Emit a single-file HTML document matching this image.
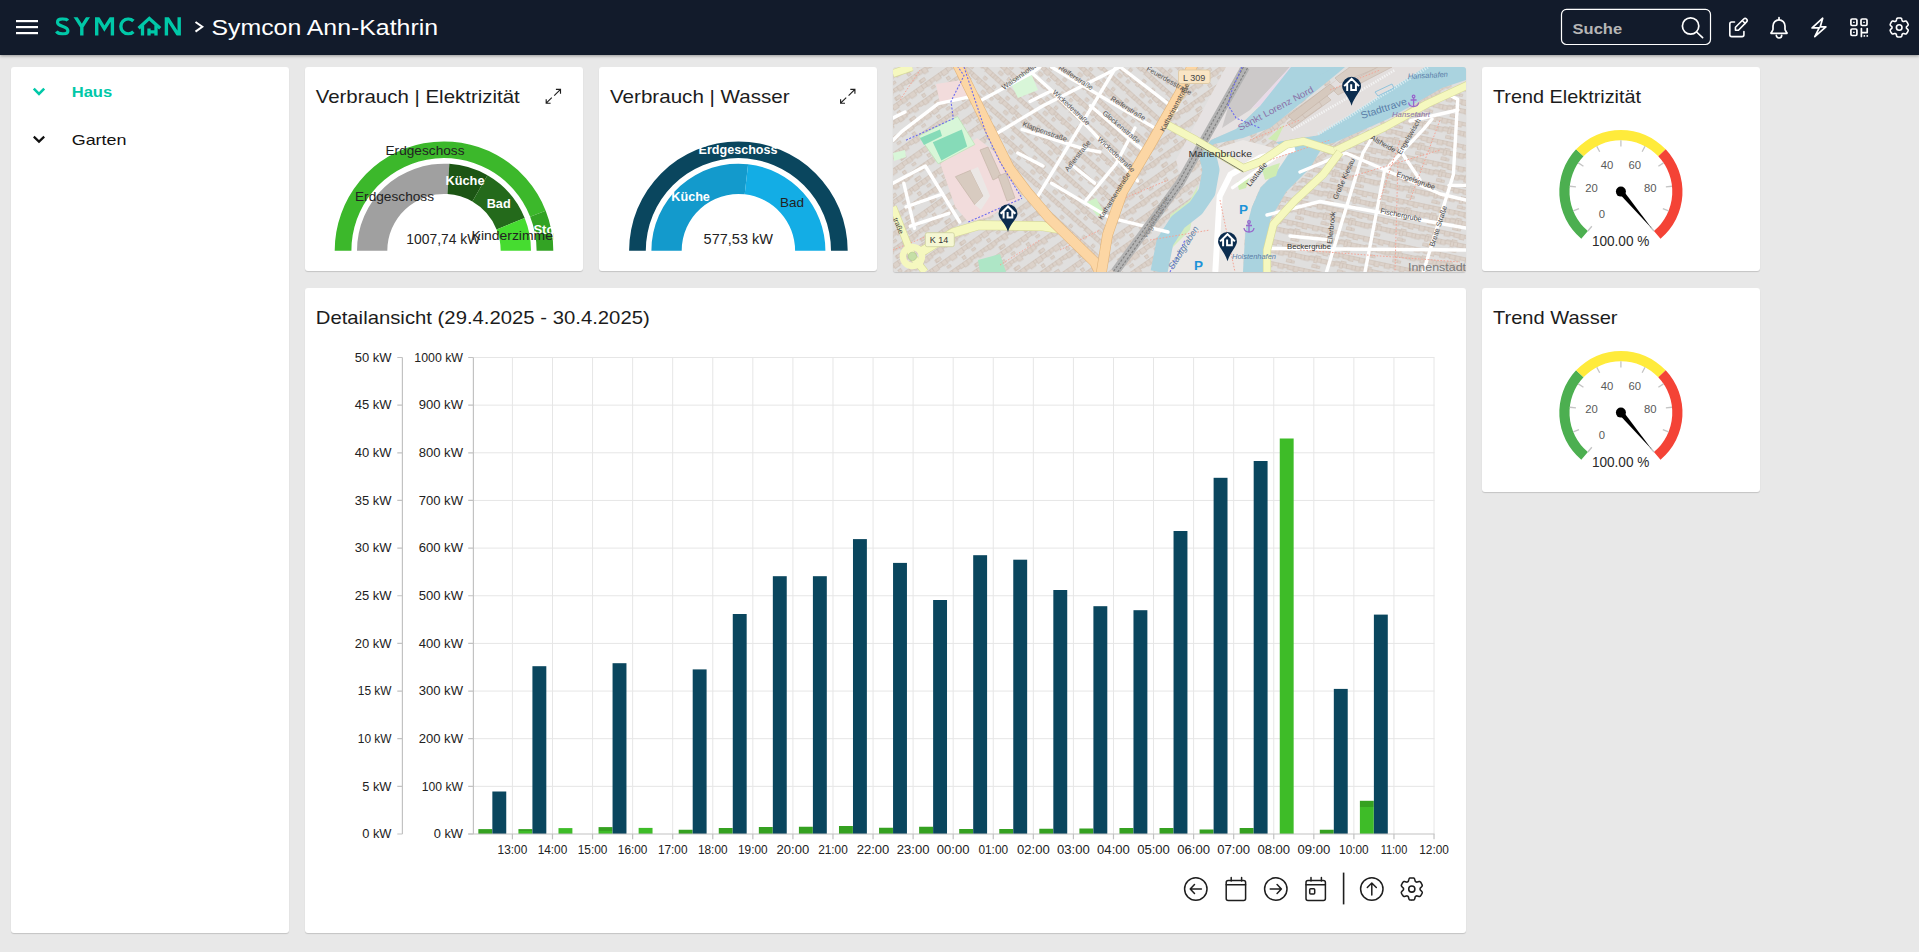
<!DOCTYPE html>
<html><head><meta charset="utf-8"><title>Symcon</title>
<style>
html,body{margin:0;padding:0;width:1919px;height:952px;overflow:hidden;background:#e8e8e8;font-family:"Liberation Sans",sans-serif;}
.hdr{position:absolute;left:0;top:0;width:1919px;height:55px;background:#121b2b;box-shadow:0 1px 3px rgba(0,0,0,.36);z-index:2}
.card{position:absolute;background:#fff;border-radius:3px;box-shadow:0 1px 1px rgba(0,0,0,.16);}
svg{position:absolute;left:0;top:0;}
</style></head><body>
<div class="hdr"></div>
<div class="card" style="left:11px;top:67px;width:278px;height:866px"></div>
<div class="card" style="left:305px;top:67px;width:278px;height:204px"></div>
<div class="card" style="left:599px;top:67px;width:278px;height:204px"></div>
<div class="card" style="left:893px;top:67px;width:573px;height:205px;overflow:hidden;background:#e4e1de"></div>
<div class="card" style="left:1482px;top:67px;width:278px;height:204px"></div>
<div class="card" style="left:305px;top:288px;width:1161px;height:645px"></div>
<div class="card" style="left:1482px;top:288px;width:278px;height:204px"></div>

<svg width="1919" height="952" viewBox="0 0 1919 952" style="z-index:3" font-family="Liberation Sans, sans-serif">
<rect x="16" y="20" width="22" height="2.2" fill="#fff"/>
<rect x="16" y="26" width="22" height="2.2" fill="#fff"/>
<rect x="16" y="32" width="22" height="2.2" fill="#fff"/>
<defs><clipPath id="lclip"><rect x="50" y="17.3" width="140" height="18.2"/></clipPath></defs>
<g fill="none" stroke="#00c8a8" stroke-width="3.4" stroke-linejoin="miter" clip-path="url(#lclip)">
<path d="M67.8,20.6 C66.8,19 64.8,18.9 62.4,18.9 C59.4,18.9 57.5,20.2 57.5,22.3 C57.5,24.6 59.6,25.4 62.4,26.3 C65.4,27.2 67.9,28.2 67.9,30.9 C67.9,33 65.6,33.9 62.4,33.9 C59.6,33.9 57.6,33.2 56.4,31.4" stroke-width="3.2"/>
<path d="M74.2,15 L81.8,26.8 L89.4,15 M81.8,26.8 L81.8,36"/>
<path d="M96.7,36 V16 L104.4,28.6 L112.4,16 V36"/>
<path d="M133.4,21 A7.4,7.5 0 1 0 133.4,31.8"/>
<path d="M166.4,36 V16.5 L179.2,36.5 V16"/>
</g>
<g fill="none" stroke="#00c8a8" stroke-width="3.3" stroke-linejoin="miter">
<path d="M138.6,28.2 L149.3,18.4 L160.2,28.2"/>
<path d="M142.5,25.2 V35.5 M156,25.2 V35.5 M149,28.6 V35.5 M149,31.9 H156"/>
</g>
<path d="M195.5,22 L202.3,26.8 L195.5,31.6" fill="none" stroke="#fff" stroke-width="2"/>
<text x="211.5" y="35.3" font-size="22" fill="#fff" textLength="226.5" lengthAdjust="spacingAndGlyphs">Symcon Ann-Kathrin</text>
<rect x="1561.5" y="9.4" width="149" height="35.1" rx="5" fill="none" stroke="#fff" stroke-width="1.2"/>
<text x="1572.6" y="33.9" font-size="15.3" font-weight="bold" fill="#b6b6b6" textLength="49.5" lengthAdjust="spacingAndGlyphs">Suche</text>
<g fill="none" stroke="#fff" stroke-width="1.7" stroke-linecap="round" stroke-linejoin="round">
<circle cx="1690.6" cy="26" r="8.2"/><path d="M1696.6,32 L1702.6,37.6"/>
<g transform="translate(1727,16.4) scale(0.94)"><path d="M8,6 H5 A2,2 0 0 0 3,8 V19.5 A2,2 0 0 0 5,21.5 H16 A2,2 0 0 0 18,19.5 V16"/><path d="M20.8,5.8 A2.1,2.1 0 0 0 17.8,2.8 L9,11.6 V14.8 H12.2 Z"/><path d="M16.3,4.4 L19.3,7.4"/></g>
<path d="M1771.3,32.6 Q1770.5,33.4 1771.8,33.4 H1786.2 Q1787.5,33.4 1786.7,32.6 L1785.6,30.8 Q1785,30.1 1785,29 V26 A6,6.2 0 0 0 1773,26 V29 Q1773,30.1 1772.4,30.8 Z"/><path d="M1779,17.7 V19.6"/><path d="M1776.3,35.3 A2.7,2.7 0 0 0 1781.7,35.3"/>
<path d="M1822.7,18.2 L1820.2,26.9 H1825.9 L1814.8,36.7 L1819.2,27.9 H1812.1 Z"/>
<rect x="1850.9" y="19" width="6" height="6.5" rx="1.2"/><rect x="1861" y="19" width="6" height="6.5" rx="1.2"/><rect x="1850.9" y="29" width="6" height="6.5" rx="1.2"/><path d="M1853.9,22.25 h0.05 M1864,22.25 h0.05 M1853.9,32.25 h0.05 M1861.4,28.6 V36.4 M1861.4,32.6 H1867.2 M1867.2,28.6 V32.6 M1864.3,35.9 h0.1 M1867.2,35.9 h0.1"/>
<path d="M1906.40,27.50 L1906.40,27.44 L1906.40,27.37 L1906.40,27.31 L1906.40,27.25 L1906.39,27.19 L1906.39,27.12 L1906.39,27.06 L1906.40,27.00 L1906.43,26.93 L1906.46,26.86 L1906.50,26.80 L1906.55,26.73 L1906.61,26.66 L1906.68,26.58 L1906.76,26.51 L1906.84,26.43 L1906.92,26.35 L1907.01,26.26 L1907.11,26.18 L1907.20,26.09 L1907.30,26.00 L1907.40,25.91 L1907.49,25.81 L1907.59,25.72 L1907.68,25.62 L1907.76,25.52 L1907.85,25.42 L1907.92,25.33 L1907.99,25.23 L1908.05,25.13 L1908.10,25.03 L1908.15,24.93 L1908.18,24.84 L1908.20,24.75 L1908.21,24.66 L1908.21,24.57 L1908.20,24.49 L1908.18,24.41 L1908.16,24.33 L1908.13,24.25 L1908.10,24.17 L1908.07,24.10 L1908.04,24.02 L1908.01,23.94 L1907.98,23.86 L1907.94,23.79 L1907.91,23.71 L1907.88,23.64 L1907.84,23.56 L1907.81,23.49 L1907.77,23.41 L1907.74,23.34 L1907.70,23.26 L1907.66,23.19 L1907.63,23.11 L1907.59,23.04 L1907.55,22.97 L1907.51,22.89 L1907.47,22.82 L1907.43,22.75 L1907.39,22.68 L1907.34,22.61 L1907.30,22.54 L1907.26,22.47 L1907.21,22.40 L1907.17,22.33 L1907.12,22.26 L1907.08,22.19 L1907.03,22.12 L1906.98,22.05 L1906.93,21.98 L1906.89,21.92 L1906.84,21.85 L1906.79,21.78 L1906.74,21.72 L1906.69,21.65 L1906.63,21.59 L1906.58,21.52 L1906.53,21.46 L1906.48,21.39 L1906.42,21.33 L1906.37,21.27 L1906.31,21.21 L1906.24,21.16 L1906.17,21.12 L1906.08,21.08 L1905.99,21.05 L1905.89,21.04 L1905.79,21.02 L1905.68,21.02 L1905.56,21.02 L1905.44,21.03 L1905.32,21.05 L1905.19,21.07 L1905.07,21.10 L1904.94,21.13 L1904.81,21.16 L1904.68,21.20 L1904.55,21.24 L1904.42,21.28 L1904.30,21.31 L1904.18,21.35 L1904.06,21.39 L1903.95,21.42 L1903.84,21.45 L1903.74,21.48 L1903.64,21.50 L1903.55,21.52 L1903.46,21.53 L1903.38,21.53 L1903.31,21.53 L1903.24,21.51 L1903.18,21.49 L1903.12,21.46 L1903.07,21.43 L1903.02,21.39 L1902.96,21.36 L1902.91,21.33 L1902.85,21.30 L1902.80,21.26 L1902.75,21.23 L1902.69,21.20 L1902.64,21.17 L1902.58,21.14 L1902.52,21.11 L1902.47,21.08 L1902.42,21.05 L1902.37,21.01 L1902.32,20.96 L1902.28,20.90 L1902.24,20.82 L1902.21,20.75 L1902.18,20.66 L1902.14,20.56 L1902.12,20.46 L1902.09,20.35 L1902.06,20.24 L1902.03,20.12 L1902.01,19.99 L1901.98,19.86 L1901.95,19.74 L1901.92,19.60 L1901.89,19.47 L1901.85,19.35 L1901.81,19.22 L1901.77,19.09 L1901.73,18.97 L1901.68,18.86 L1901.63,18.75 L1901.57,18.65 L1901.51,18.56 L1901.45,18.47 L1901.39,18.39 L1901.32,18.33 L1901.25,18.27 L1901.17,18.23 L1901.09,18.20 L1901.01,18.17 L1900.93,18.16 L1900.85,18.14 L1900.77,18.13 L1900.69,18.12 L1900.60,18.10 L1900.52,18.09 L1900.44,18.08 L1900.36,18.07 L1900.28,18.06 L1900.19,18.05 L1900.11,18.04 L1900.03,18.04 L1899.95,18.03 L1899.86,18.02 L1899.78,18.02 L1899.70,18.01 L1899.61,18.01 L1899.53,18.01 L1899.45,18.00 L1899.37,18.00 L1899.28,18.00 L1899.20,18.00 L1899.12,18.00 L1899.03,18.00 L1898.95,18.00 L1898.87,18.01 L1898.79,18.01 L1898.70,18.01 L1898.62,18.02 L1898.54,18.02 L1898.45,18.03 L1898.37,18.04 L1898.29,18.04 L1898.21,18.05 L1898.12,18.06 L1898.04,18.07 L1897.96,18.08 L1897.88,18.09 L1897.80,18.10 L1897.71,18.12 L1897.63,18.13 L1897.55,18.14 L1897.47,18.16 L1897.39,18.17 L1897.31,18.20 L1897.23,18.23 L1897.15,18.27 L1897.08,18.33 L1897.01,18.39 L1896.95,18.47 L1896.89,18.56 L1896.83,18.65 L1896.77,18.75 L1896.72,18.86 L1896.67,18.97 L1896.63,19.09 L1896.59,19.22 L1896.55,19.35 L1896.51,19.47 L1896.48,19.60 L1896.45,19.74 L1896.42,19.86 L1896.39,19.99 L1896.37,20.12 L1896.34,20.24 L1896.31,20.35 L1896.28,20.46 L1896.26,20.56 L1896.22,20.66 L1896.19,20.75 L1896.16,20.82 L1896.12,20.90 L1896.08,20.96 L1896.03,21.01 L1895.98,21.05 L1895.93,21.08 L1895.88,21.11 L1895.82,21.14 L1895.76,21.17 L1895.71,21.20 L1895.65,21.23 L1895.60,21.26 L1895.55,21.30 L1895.49,21.33 L1895.44,21.36 L1895.38,21.39 L1895.33,21.43 L1895.28,21.46 L1895.22,21.49 L1895.16,21.51 L1895.09,21.53 L1895.02,21.53 L1894.94,21.53 L1894.85,21.52 L1894.76,21.50 L1894.66,21.48 L1894.56,21.45 L1894.45,21.42 L1894.34,21.39 L1894.22,21.35 L1894.10,21.31 L1893.98,21.28 L1893.85,21.24 L1893.72,21.20 L1893.59,21.16 L1893.46,21.13 L1893.33,21.10 L1893.21,21.07 L1893.08,21.05 L1892.96,21.03 L1892.84,21.02 L1892.72,21.02 L1892.61,21.02 L1892.51,21.04 L1892.41,21.05 L1892.32,21.08 L1892.23,21.12 L1892.16,21.16 L1892.09,21.21 L1892.03,21.27 L1891.98,21.33 L1891.92,21.39 L1891.87,21.46 L1891.82,21.52 L1891.77,21.59 L1891.71,21.65 L1891.66,21.72 L1891.61,21.78 L1891.56,21.85 L1891.51,21.92 L1891.47,21.98 L1891.42,22.05 L1891.37,22.12 L1891.32,22.19 L1891.28,22.26 L1891.23,22.33 L1891.19,22.40 L1891.14,22.47 L1891.10,22.54 L1891.06,22.61 L1891.01,22.68 L1890.97,22.75 L1890.93,22.82 L1890.89,22.89 L1890.85,22.97 L1890.81,23.04 L1890.77,23.11 L1890.74,23.19 L1890.70,23.26 L1890.66,23.34 L1890.63,23.41 L1890.59,23.49 L1890.56,23.56 L1890.52,23.64 L1890.49,23.71 L1890.46,23.79 L1890.42,23.86 L1890.39,23.94 L1890.36,24.02 L1890.33,24.10 L1890.30,24.17 L1890.27,24.25 L1890.24,24.33 L1890.22,24.41 L1890.20,24.49 L1890.19,24.57 L1890.19,24.66 L1890.20,24.75 L1890.22,24.84 L1890.25,24.93 L1890.30,25.03 L1890.35,25.13 L1890.41,25.23 L1890.48,25.33 L1890.55,25.42 L1890.64,25.52 L1890.72,25.62 L1890.81,25.72 L1890.91,25.81 L1891.00,25.91 L1891.10,26.00 L1891.20,26.09 L1891.29,26.18 L1891.39,26.26 L1891.48,26.35 L1891.56,26.43 L1891.64,26.51 L1891.72,26.58 L1891.79,26.66 L1891.85,26.73 L1891.90,26.80 L1891.94,26.86 L1891.97,26.93 L1892.00,27.00 L1892.01,27.06 L1892.01,27.12 L1892.01,27.19 L1892.00,27.25 L1892.00,27.31 L1892.00,27.37 L1892.00,27.44 L1892.00,27.50 L1892.00,27.56 L1892.00,27.63 L1892.00,27.69 L1892.00,27.75 L1892.01,27.81 L1892.01,27.88 L1892.01,27.94 L1892.00,28.00 L1891.97,28.07 L1891.94,28.14 L1891.90,28.20 L1891.85,28.27 L1891.79,28.34 L1891.72,28.42 L1891.64,28.49 L1891.56,28.57 L1891.48,28.65 L1891.39,28.74 L1891.29,28.82 L1891.20,28.91 L1891.10,29.00 L1891.00,29.09 L1890.91,29.19 L1890.81,29.28 L1890.72,29.38 L1890.64,29.48 L1890.55,29.58 L1890.48,29.67 L1890.41,29.77 L1890.35,29.87 L1890.30,29.97 L1890.25,30.07 L1890.22,30.16 L1890.20,30.25 L1890.19,30.34 L1890.19,30.43 L1890.20,30.51 L1890.22,30.59 L1890.24,30.67 L1890.27,30.75 L1890.30,30.83 L1890.33,30.90 L1890.36,30.98 L1890.39,31.06 L1890.42,31.14 L1890.46,31.21 L1890.49,31.29 L1890.52,31.36 L1890.56,31.44 L1890.59,31.51 L1890.63,31.59 L1890.66,31.66 L1890.70,31.74 L1890.74,31.81 L1890.77,31.89 L1890.81,31.96 L1890.85,32.03 L1890.89,32.11 L1890.93,32.18 L1890.97,32.25 L1891.01,32.32 L1891.06,32.39 L1891.10,32.46 L1891.14,32.53 L1891.19,32.60 L1891.23,32.67 L1891.28,32.74 L1891.32,32.81 L1891.37,32.88 L1891.42,32.95 L1891.47,33.02 L1891.51,33.08 L1891.56,33.15 L1891.61,33.22 L1891.66,33.28 L1891.71,33.35 L1891.77,33.41 L1891.82,33.48 L1891.87,33.54 L1891.92,33.61 L1891.98,33.67 L1892.03,33.73 L1892.09,33.79 L1892.16,33.84 L1892.23,33.88 L1892.32,33.92 L1892.41,33.95 L1892.51,33.96 L1892.61,33.98 L1892.72,33.98 L1892.84,33.98 L1892.96,33.97 L1893.08,33.95 L1893.21,33.93 L1893.33,33.90 L1893.46,33.87 L1893.59,33.84 L1893.72,33.80 L1893.85,33.76 L1893.98,33.72 L1894.10,33.69 L1894.22,33.65 L1894.34,33.61 L1894.45,33.58 L1894.56,33.55 L1894.66,33.52 L1894.76,33.50 L1894.85,33.48 L1894.94,33.47 L1895.02,33.47 L1895.09,33.47 L1895.16,33.49 L1895.22,33.51 L1895.28,33.54 L1895.33,33.57 L1895.38,33.61 L1895.44,33.64 L1895.49,33.67 L1895.55,33.70 L1895.60,33.74 L1895.65,33.77 L1895.71,33.80 L1895.76,33.83 L1895.82,33.86 L1895.88,33.89 L1895.93,33.92 L1895.98,33.95 L1896.03,33.99 L1896.08,34.04 L1896.12,34.10 L1896.16,34.18 L1896.19,34.25 L1896.22,34.34 L1896.26,34.44 L1896.28,34.54 L1896.31,34.65 L1896.34,34.76 L1896.37,34.88 L1896.39,35.01 L1896.42,35.14 L1896.45,35.26 L1896.48,35.40 L1896.51,35.53 L1896.55,35.65 L1896.59,35.78 L1896.63,35.91 L1896.67,36.03 L1896.72,36.14 L1896.77,36.25 L1896.83,36.35 L1896.89,36.44 L1896.95,36.53 L1897.01,36.61 L1897.08,36.67 L1897.15,36.73 L1897.23,36.77 L1897.31,36.80 L1897.39,36.83 L1897.47,36.84 L1897.55,36.86 L1897.63,36.87 L1897.71,36.88 L1897.80,36.90 L1897.88,36.91 L1897.96,36.92 L1898.04,36.93 L1898.12,36.94 L1898.21,36.95 L1898.29,36.96 L1898.37,36.96 L1898.45,36.97 L1898.54,36.98 L1898.62,36.98 L1898.70,36.99 L1898.79,36.99 L1898.87,36.99 L1898.95,37.00 L1899.03,37.00 L1899.12,37.00 L1899.20,37.00 L1899.28,37.00 L1899.37,37.00 L1899.45,37.00 L1899.53,36.99 L1899.61,36.99 L1899.70,36.99 L1899.78,36.98 L1899.86,36.98 L1899.95,36.97 L1900.03,36.96 L1900.11,36.96 L1900.19,36.95 L1900.28,36.94 L1900.36,36.93 L1900.44,36.92 L1900.52,36.91 L1900.60,36.90 L1900.69,36.88 L1900.77,36.87 L1900.85,36.86 L1900.93,36.84 L1901.01,36.83 L1901.09,36.80 L1901.17,36.77 L1901.25,36.73 L1901.32,36.67 L1901.39,36.61 L1901.45,36.53 L1901.51,36.44 L1901.57,36.35 L1901.63,36.25 L1901.68,36.14 L1901.73,36.03 L1901.77,35.91 L1901.81,35.78 L1901.85,35.65 L1901.89,35.53 L1901.92,35.40 L1901.95,35.26 L1901.98,35.14 L1902.01,35.01 L1902.03,34.88 L1902.06,34.76 L1902.09,34.65 L1902.12,34.54 L1902.14,34.44 L1902.18,34.34 L1902.21,34.25 L1902.24,34.18 L1902.28,34.10 L1902.32,34.04 L1902.37,33.99 L1902.42,33.95 L1902.47,33.92 L1902.52,33.89 L1902.58,33.86 L1902.64,33.83 L1902.69,33.80 L1902.75,33.77 L1902.80,33.74 L1902.85,33.70 L1902.91,33.67 L1902.96,33.64 L1903.02,33.61 L1903.07,33.57 L1903.12,33.54 L1903.18,33.51 L1903.24,33.49 L1903.31,33.47 L1903.38,33.47 L1903.46,33.47 L1903.55,33.48 L1903.64,33.50 L1903.74,33.52 L1903.84,33.55 L1903.95,33.58 L1904.06,33.61 L1904.18,33.65 L1904.30,33.69 L1904.42,33.72 L1904.55,33.76 L1904.68,33.80 L1904.81,33.84 L1904.94,33.87 L1905.07,33.90 L1905.19,33.93 L1905.32,33.95 L1905.44,33.97 L1905.56,33.98 L1905.68,33.98 L1905.79,33.98 L1905.89,33.96 L1905.99,33.95 L1906.08,33.92 L1906.17,33.88 L1906.24,33.84 L1906.31,33.79 L1906.37,33.73 L1906.42,33.67 L1906.48,33.61 L1906.53,33.54 L1906.58,33.48 L1906.63,33.41 L1906.69,33.35 L1906.74,33.28 L1906.79,33.22 L1906.84,33.15 L1906.89,33.08 L1906.93,33.02 L1906.98,32.95 L1907.03,32.88 L1907.08,32.81 L1907.12,32.74 L1907.17,32.67 L1907.21,32.60 L1907.26,32.53 L1907.30,32.46 L1907.34,32.39 L1907.39,32.32 L1907.43,32.25 L1907.47,32.18 L1907.51,32.11 L1907.55,32.03 L1907.59,31.96 L1907.63,31.89 L1907.66,31.81 L1907.70,31.74 L1907.74,31.66 L1907.77,31.59 L1907.81,31.51 L1907.84,31.44 L1907.88,31.36 L1907.91,31.29 L1907.94,31.21 L1907.98,31.14 L1908.01,31.06 L1908.04,30.98 L1908.07,30.90 L1908.10,30.83 L1908.13,30.75 L1908.16,30.67 L1908.18,30.59 L1908.20,30.51 L1908.21,30.43 L1908.21,30.34 L1908.20,30.25 L1908.18,30.16 L1908.15,30.07 L1908.10,29.97 L1908.05,29.87 L1907.99,29.77 L1907.92,29.67 L1907.85,29.58 L1907.76,29.48 L1907.68,29.38 L1907.59,29.28 L1907.49,29.19 L1907.40,29.09 L1907.30,29.00 L1907.20,28.91 L1907.11,28.82 L1907.01,28.74 L1906.92,28.65 L1906.84,28.57 L1906.76,28.49 L1906.68,28.42 L1906.61,28.34 L1906.55,28.27 L1906.50,28.20 L1906.46,28.14 L1906.43,28.07 L1906.40,28.00 L1906.39,27.94 L1906.39,27.88 L1906.39,27.81 L1906.40,27.75 L1906.40,27.69 L1906.40,27.63 L1906.40,27.56 L1906.40,27.50 L1906.40,27.44 Z" stroke-width="1.6"/><circle cx="1899.2" cy="27.5" r="2.8" stroke-width="1.6"/>
</g>
<path d="M33.8,88.6 L39,93.8 L44.2,88.6" fill="none" stroke="#00c8a8" stroke-width="2.6"/>
<text x="71.7" y="97" font-size="15.2" font-weight="bold" fill="#00c8a8" textLength="40.5" lengthAdjust="spacingAndGlyphs">Haus</text>
<path d="M33.8,136.6 L39,141.6 L44.2,136.6" fill="none" stroke="#111" stroke-width="2.2"/>
<text x="71.7" y="144.7" font-size="15" fill="#111" textLength="54.8" lengthAdjust="spacingAndGlyphs">Garten</text>
<text x="315.7" y="103.2" font-size="18.5" fill="#1c1c1c" textLength="204" lengthAdjust="spacingAndGlyphs">Verbrauch | Elektrizität</text>
<text x="610" y="103.2" font-size="18.5" fill="#1c1c1c" textLength="179.6" lengthAdjust="spacingAndGlyphs">Verbrauch | Wasser</text>
<text x="1493" y="103.2" font-size="18.5" fill="#1c1c1c" textLength="148" lengthAdjust="spacingAndGlyphs">Trend Elektrizität</text>
<text x="1493" y="324.1" font-size="18.5" fill="#1c1c1c" textLength="124.5" lengthAdjust="spacingAndGlyphs">Trend Wasser</text>
<text x="315.75" y="324.1" font-size="18.5" fill="#1c1c1c" textLength="334" lengthAdjust="spacingAndGlyphs">Detailansicht (29.4.2025 - 30.4.2025)</text>
<path d="M555.90,89.35 H560.50 V93.80 M560.50,89.35 L554.20,95.60 M546.20,99.35 V103.20 H550.60 M546.20,103.20 L551.80,97.60" fill="none" stroke="#1e1e1e" stroke-width="1.15" stroke-linecap="butt"/>
<path d="M850.30,89.35 H854.90 V93.80 M854.90,89.35 L848.60,95.60 M840.60,99.35 V103.20 H845.00 M840.60,103.20 L846.20,97.60" fill="none" stroke="#1e1e1e" stroke-width="1.15" stroke-linecap="butt"/>
<path d="M334.70,250.70 A109.3,109.3 0 0 1 545.69,210.64 L530.16,216.76 A92.6,92.6 0 0 0 351.40,250.70 Z" fill="#3cb82b" />
<path d="M545.69,210.64 A109.3,109.3 0 0 1 553.30,250.70 L536.60,250.70 A92.6,92.6 0 0 0 530.16,216.76 Z" fill="#33a324" />
<path d="M357.00,250.70 A87,87 0 0 1 449.31,163.86 L447.46,194.11 A56.7,56.7 0 0 0 387.30,250.70 Z" fill="#a0a0a0" />
<path d="M449.31,163.86 A87,87 0 0 1 487.50,175.36 L472.35,201.60 A56.7,56.7 0 0 0 447.46,194.11 Z" fill="#1c5514" />
<path d="M487.50,175.36 A87,87 0 0 1 524.66,218.11 L496.57,229.46 A56.7,56.7 0 0 0 472.35,201.60 Z" fill="#246a1b" />
<path d="M524.66,218.11 A87,87 0 0 1 531.00,250.70 L500.70,250.70 A56.7,56.7 0 0 0 496.57,229.46 Z" fill="#46dc30" />
<text x="385.5" y="155.2" font-size="12.5" fill="#222" textLength="79" lengthAdjust="spacingAndGlyphs">Erdgeschoss</text>
<text x="355" y="201.4" font-size="12.5" fill="#222" textLength="79" lengthAdjust="spacingAndGlyphs">Erdgeschoss</text>
<text x="445.5" y="185.4" font-size="13" font-weight="bold" fill="#fff" textLength="39" lengthAdjust="spacingAndGlyphs">Küche</text>
<text x="486.7" y="207.5" font-size="13" font-weight="bold" fill="#fff" textLength="24" lengthAdjust="spacingAndGlyphs">Bad</text>
<svg x="330" y="130" width="223.5" height="125" overflow="hidden">
<text x="203.4" y="104" font-size="13" font-weight="bold" fill="#fff">Sto</text>
<text x="141.6" y="110.3" font-size="12.5" fill="#222" textLength="86" lengthAdjust="spacingAndGlyphs">Kinderzimmer</text>
</svg>
<text x="406.3" y="243.7" font-size="14.5" fill="#222" textLength="74" lengthAdjust="spacingAndGlyphs">1007,74 kW</text>
<path d="M629.10,250.70 A109.3,109.3 0 0 1 847.70,250.70 L831.00,250.70 A92.6,92.6 0 0 0 645.80,250.70 Z" fill="#0a465e" />
<path d="M651.40,250.70 A87,87 0 0 1 748.10,164.24 L744.72,194.35 A56.7,56.7 0 0 0 681.70,250.70 Z" fill="#139acc" />
<path d="M748.10,164.24 A87,87 0 0 1 825.40,250.70 L795.10,250.70 A56.7,56.7 0 0 0 744.72,194.35 Z" fill="#13ade5" />
<text x="698.5" y="153.6" font-size="13" font-weight="bold" fill="#fff" textLength="79" lengthAdjust="spacingAndGlyphs">Erdgeschoss</text>
<text x="671.3" y="201" font-size="13" font-weight="bold" fill="#fff" textLength="38.6" lengthAdjust="spacingAndGlyphs">Küche</text>
<text x="780" y="206.8" font-size="13" fill="#222" textLength="24" lengthAdjust="spacingAndGlyphs">Bad</text>
<text x="703.6" y="243.7" font-size="14.5" fill="#222" textLength="69.4" lengthAdjust="spacingAndGlyphs">577,53 kW</text>
<path d="M1581.30,238.79 A61.6,61.6 0 0 1 1576.09,149.33 L1583.51,156.33 A51.4,51.4 0 0 0 1587.86,230.97 Z" fill="#4caf50" />
<path d="M1576.09,149.33 A61.6,61.6 0 0 1 1665.71,149.33 L1658.29,156.33 A51.4,51.4 0 0 0 1583.51,156.33 Z" fill="#ffeb3b" />
<path d="M1665.71,149.33 A61.6,61.6 0 0 1 1660.50,238.79 L1653.94,230.97 A51.4,51.4 0 0 0 1658.29,156.33 Z" fill="#f44336" />
<line x1="1591.85" y1="226.23" x2="1587.86" y2="230.97" stroke="#c4c4c4" stroke-width="1.3"/>
<line x1="1578.99" y1="208.53" x2="1573.24" y2="210.85" stroke="#c4c4c4" stroke-width="1.3"/>
<line x1="1575.95" y1="186.88" x2="1569.78" y2="186.23" stroke="#c4c4c4" stroke-width="1.3"/>
<line x1="1583.43" y1="166.32" x2="1578.29" y2="162.86" stroke="#c4c4c4" stroke-width="1.3"/>
<line x1="1599.68" y1="151.69" x2="1596.77" y2="146.22" stroke="#c4c4c4" stroke-width="1.3"/>
<line x1="1620.90" y1="146.40" x2="1620.90" y2="140.20" stroke="#c4c4c4" stroke-width="1.3"/>
<line x1="1642.12" y1="151.69" x2="1645.03" y2="146.22" stroke="#c4c4c4" stroke-width="1.3"/>
<line x1="1658.37" y1="166.32" x2="1663.51" y2="162.86" stroke="#c4c4c4" stroke-width="1.3"/>
<line x1="1665.85" y1="186.88" x2="1672.02" y2="186.23" stroke="#c4c4c4" stroke-width="1.3"/>
<line x1="1662.81" y1="208.53" x2="1668.56" y2="210.85" stroke="#c4c4c4" stroke-width="1.3"/>
<line x1="1649.95" y1="226.23" x2="1653.94" y2="230.97" stroke="#c4c4c4" stroke-width="1.3"/>
<text x="1601.94" y="217.60" font-size="11.3" fill="#5a5a5a" text-anchor="middle">0</text>
<text x="1591.56" y="191.92" font-size="11.3" fill="#5a5a5a" text-anchor="middle">20</text>
<text x="1607.05" y="168.95" font-size="11.3" fill="#5a5a5a" text-anchor="middle">40</text>
<text x="1634.75" y="168.95" font-size="11.3" fill="#5a5a5a" text-anchor="middle">60</text>
<text x="1650.24" y="191.92" font-size="11.3" fill="#5a5a5a" text-anchor="middle">80</text>
<path d="M1622.89,189.93 L1652.08,228.75 L1618.91,193.27 Z" fill="#000"/>
<circle cx="1620.9" cy="191.6" r="5" fill="#000"/>
<text x="1591.90" y="245.50" font-size="14.5" fill="#2a2a2a" textLength="57.5" lengthAdjust="spacingAndGlyphs">100.00 %</text>
<path d="M1581.30,459.79 A61.6,61.6 0 0 1 1576.09,370.33 L1583.51,377.33 A51.4,51.4 0 0 0 1587.86,451.97 Z" fill="#4caf50" />
<path d="M1576.09,370.33 A61.6,61.6 0 0 1 1665.71,370.33 L1658.29,377.33 A51.4,51.4 0 0 0 1583.51,377.33 Z" fill="#ffeb3b" />
<path d="M1665.71,370.33 A61.6,61.6 0 0 1 1660.50,459.79 L1653.94,451.97 A51.4,51.4 0 0 0 1658.29,377.33 Z" fill="#f44336" />
<line x1="1591.85" y1="447.23" x2="1587.86" y2="451.97" stroke="#c4c4c4" stroke-width="1.3"/>
<line x1="1578.99" y1="429.53" x2="1573.24" y2="431.85" stroke="#c4c4c4" stroke-width="1.3"/>
<line x1="1575.95" y1="407.88" x2="1569.78" y2="407.23" stroke="#c4c4c4" stroke-width="1.3"/>
<line x1="1583.43" y1="387.32" x2="1578.29" y2="383.86" stroke="#c4c4c4" stroke-width="1.3"/>
<line x1="1599.68" y1="372.69" x2="1596.77" y2="367.22" stroke="#c4c4c4" stroke-width="1.3"/>
<line x1="1620.90" y1="367.40" x2="1620.90" y2="361.20" stroke="#c4c4c4" stroke-width="1.3"/>
<line x1="1642.12" y1="372.69" x2="1645.03" y2="367.22" stroke="#c4c4c4" stroke-width="1.3"/>
<line x1="1658.37" y1="387.32" x2="1663.51" y2="383.86" stroke="#c4c4c4" stroke-width="1.3"/>
<line x1="1665.85" y1="407.88" x2="1672.02" y2="407.23" stroke="#c4c4c4" stroke-width="1.3"/>
<line x1="1662.81" y1="429.53" x2="1668.56" y2="431.85" stroke="#c4c4c4" stroke-width="1.3"/>
<line x1="1649.95" y1="447.23" x2="1653.94" y2="451.97" stroke="#c4c4c4" stroke-width="1.3"/>
<text x="1601.94" y="438.60" font-size="11.3" fill="#5a5a5a" text-anchor="middle">0</text>
<text x="1591.56" y="412.92" font-size="11.3" fill="#5a5a5a" text-anchor="middle">20</text>
<text x="1607.05" y="389.95" font-size="11.3" fill="#5a5a5a" text-anchor="middle">40</text>
<text x="1634.75" y="389.95" font-size="11.3" fill="#5a5a5a" text-anchor="middle">60</text>
<text x="1650.24" y="412.92" font-size="11.3" fill="#5a5a5a" text-anchor="middle">80</text>
<path d="M1622.89,410.93 L1652.08,449.75 L1618.91,414.27 Z" fill="#000"/>
<circle cx="1620.9" cy="412.6" r="5" fill="#000"/>
<text x="1591.90" y="466.50" font-size="14.5" fill="#2a2a2a" textLength="57.5" lengthAdjust="spacingAndGlyphs">100.00 %</text>
<line x1="473.5" y1="357.50" x2="1434.5" y2="357.50" stroke="#e6e6e6" stroke-width="1"/>
<line x1="473.5" y1="405.15" x2="1434.5" y2="405.15" stroke="#e6e6e6" stroke-width="1"/>
<line x1="473.5" y1="452.80" x2="1434.5" y2="452.80" stroke="#e6e6e6" stroke-width="1"/>
<line x1="473.5" y1="500.45" x2="1434.5" y2="500.45" stroke="#e6e6e6" stroke-width="1"/>
<line x1="473.5" y1="548.10" x2="1434.5" y2="548.10" stroke="#e6e6e6" stroke-width="1"/>
<line x1="473.5" y1="595.75" x2="1434.5" y2="595.75" stroke="#e6e6e6" stroke-width="1"/>
<line x1="473.5" y1="643.40" x2="1434.5" y2="643.40" stroke="#e6e6e6" stroke-width="1"/>
<line x1="473.5" y1="691.05" x2="1434.5" y2="691.05" stroke="#e6e6e6" stroke-width="1"/>
<line x1="473.5" y1="738.70" x2="1434.5" y2="738.70" stroke="#e6e6e6" stroke-width="1"/>
<line x1="473.5" y1="786.35" x2="1434.5" y2="786.35" stroke="#e6e6e6" stroke-width="1"/>
<line x1="512.42" y1="357.5" x2="512.42" y2="834.0" stroke="#e6e6e6" stroke-width="1"/>
<line x1="552.49" y1="357.5" x2="552.49" y2="834.0" stroke="#e6e6e6" stroke-width="1"/>
<line x1="592.56" y1="357.5" x2="592.56" y2="834.0" stroke="#e6e6e6" stroke-width="1"/>
<line x1="632.63" y1="357.5" x2="632.63" y2="834.0" stroke="#e6e6e6" stroke-width="1"/>
<line x1="672.70" y1="357.5" x2="672.70" y2="834.0" stroke="#e6e6e6" stroke-width="1"/>
<line x1="712.77" y1="357.5" x2="712.77" y2="834.0" stroke="#e6e6e6" stroke-width="1"/>
<line x1="752.84" y1="357.5" x2="752.84" y2="834.0" stroke="#e6e6e6" stroke-width="1"/>
<line x1="792.91" y1="357.5" x2="792.91" y2="834.0" stroke="#e6e6e6" stroke-width="1"/>
<line x1="832.98" y1="357.5" x2="832.98" y2="834.0" stroke="#e6e6e6" stroke-width="1"/>
<line x1="873.05" y1="357.5" x2="873.05" y2="834.0" stroke="#e6e6e6" stroke-width="1"/>
<line x1="913.12" y1="357.5" x2="913.12" y2="834.0" stroke="#e6e6e6" stroke-width="1"/>
<line x1="953.19" y1="357.5" x2="953.19" y2="834.0" stroke="#e6e6e6" stroke-width="1"/>
<line x1="993.26" y1="357.5" x2="993.26" y2="834.0" stroke="#e6e6e6" stroke-width="1"/>
<line x1="1033.33" y1="357.5" x2="1033.33" y2="834.0" stroke="#e6e6e6" stroke-width="1"/>
<line x1="1073.40" y1="357.5" x2="1073.40" y2="834.0" stroke="#e6e6e6" stroke-width="1"/>
<line x1="1113.47" y1="357.5" x2="1113.47" y2="834.0" stroke="#e6e6e6" stroke-width="1"/>
<line x1="1153.54" y1="357.5" x2="1153.54" y2="834.0" stroke="#e6e6e6" stroke-width="1"/>
<line x1="1193.61" y1="357.5" x2="1193.61" y2="834.0" stroke="#e6e6e6" stroke-width="1"/>
<line x1="1233.68" y1="357.5" x2="1233.68" y2="834.0" stroke="#e6e6e6" stroke-width="1"/>
<line x1="1273.75" y1="357.5" x2="1273.75" y2="834.0" stroke="#e6e6e6" stroke-width="1"/>
<line x1="1313.82" y1="357.5" x2="1313.82" y2="834.0" stroke="#e6e6e6" stroke-width="1"/>
<line x1="1353.89" y1="357.5" x2="1353.89" y2="834.0" stroke="#e6e6e6" stroke-width="1"/>
<line x1="1393.96" y1="357.5" x2="1393.96" y2="834.0" stroke="#e6e6e6" stroke-width="1"/>
<line x1="1434.03" y1="357.5" x2="1434.03" y2="834.0" stroke="#e6e6e6" stroke-width="1"/>
<path d="M402.4,357.5 V834.0" stroke="#c2c2c2" stroke-width="1.2" fill="none"/>
<path d="M473.4,357.5 V834.0" stroke="#c2c2c2" stroke-width="1.2" fill="none"/>
<path d="M397.3,357.50 H402.4 M468.2,357.50 H473.4" stroke="#c2c2c2" stroke-width="1.2" fill="none"/>
<text x="354.70" y="361.80" font-size="12.3" fill="#222" textLength="36.80" lengthAdjust="spacingAndGlyphs">50 kW</text>
<text x="414.30" y="361.80" font-size="12.3" fill="#222" textLength="48.70" lengthAdjust="spacingAndGlyphs">1000 kW</text>
<path d="M397.3,405.15 H402.4 M468.2,405.15 H473.4" stroke="#c2c2c2" stroke-width="1.2" fill="none"/>
<text x="354.70" y="409.45" font-size="12.3" fill="#222" textLength="36.80" lengthAdjust="spacingAndGlyphs">45 kW</text>
<text x="418.70" y="409.45" font-size="12.3" fill="#222" textLength="44.30" lengthAdjust="spacingAndGlyphs">900 kW</text>
<path d="M397.3,452.80 H402.4 M468.2,452.80 H473.4" stroke="#c2c2c2" stroke-width="1.2" fill="none"/>
<text x="354.70" y="457.10" font-size="12.3" fill="#222" textLength="36.80" lengthAdjust="spacingAndGlyphs">40 kW</text>
<text x="418.70" y="457.10" font-size="12.3" fill="#222" textLength="44.30" lengthAdjust="spacingAndGlyphs">800 kW</text>
<path d="M397.3,500.45 H402.4 M468.2,500.45 H473.4" stroke="#c2c2c2" stroke-width="1.2" fill="none"/>
<text x="354.70" y="504.75" font-size="12.3" fill="#222" textLength="36.80" lengthAdjust="spacingAndGlyphs">35 kW</text>
<text x="418.70" y="504.75" font-size="12.3" fill="#222" textLength="44.30" lengthAdjust="spacingAndGlyphs">700 kW</text>
<path d="M397.3,548.10 H402.4 M468.2,548.10 H473.4" stroke="#c2c2c2" stroke-width="1.2" fill="none"/>
<text x="354.70" y="552.40" font-size="12.3" fill="#222" textLength="36.80" lengthAdjust="spacingAndGlyphs">30 kW</text>
<text x="418.70" y="552.40" font-size="12.3" fill="#222" textLength="44.30" lengthAdjust="spacingAndGlyphs">600 kW</text>
<path d="M397.3,595.75 H402.4 M468.2,595.75 H473.4" stroke="#c2c2c2" stroke-width="1.2" fill="none"/>
<text x="354.70" y="600.05" font-size="12.3" fill="#222" textLength="36.80" lengthAdjust="spacingAndGlyphs">25 kW</text>
<text x="418.70" y="600.05" font-size="12.3" fill="#222" textLength="44.30" lengthAdjust="spacingAndGlyphs">500 kW</text>
<path d="M397.3,643.40 H402.4 M468.2,643.40 H473.4" stroke="#c2c2c2" stroke-width="1.2" fill="none"/>
<text x="354.70" y="647.70" font-size="12.3" fill="#222" textLength="36.80" lengthAdjust="spacingAndGlyphs">20 kW</text>
<text x="418.70" y="647.70" font-size="12.3" fill="#222" textLength="44.30" lengthAdjust="spacingAndGlyphs">400 kW</text>
<path d="M397.3,691.05 H402.4 M468.2,691.05 H473.4" stroke="#c2c2c2" stroke-width="1.2" fill="none"/>
<text x="357.80" y="695.35" font-size="12.3" fill="#222" textLength="33.70" lengthAdjust="spacingAndGlyphs">15 kW</text>
<text x="418.70" y="695.35" font-size="12.3" fill="#222" textLength="44.30" lengthAdjust="spacingAndGlyphs">300 kW</text>
<path d="M397.3,738.70 H402.4 M468.2,738.70 H473.4" stroke="#c2c2c2" stroke-width="1.2" fill="none"/>
<text x="357.80" y="743.00" font-size="12.3" fill="#222" textLength="33.70" lengthAdjust="spacingAndGlyphs">10 kW</text>
<text x="418.70" y="743.00" font-size="12.3" fill="#222" textLength="44.30" lengthAdjust="spacingAndGlyphs">200 kW</text>
<path d="M397.3,786.35 H402.4 M468.2,786.35 H473.4" stroke="#c2c2c2" stroke-width="1.2" fill="none"/>
<text x="362.20" y="790.65" font-size="12.3" fill="#222" textLength="29.30" lengthAdjust="spacingAndGlyphs">5 kW</text>
<text x="421.80" y="790.65" font-size="12.3" fill="#222" textLength="41.20" lengthAdjust="spacingAndGlyphs">100 kW</text>
<path d="M397.3,834.00 H402.4 M468.2,834.00 H473.4" stroke="#c2c2c2" stroke-width="1.2" fill="none"/>
<text x="362.20" y="838.30" font-size="12.3" fill="#222" textLength="29.30" lengthAdjust="spacingAndGlyphs">0 kW</text>
<text x="433.70" y="838.30" font-size="12.3" fill="#222" textLength="29.30" lengthAdjust="spacingAndGlyphs">0 kW</text>
<rect x="478.35" y="829.1" width="13.9" height="4.90" fill="#35a121"/>
<rect x="518.42" y="829.1" width="13.9" height="1.90" fill="#35a121"/>
<rect x="518.42" y="831" width="13.9" height="3.00" fill="#3ebc28"/>
<rect x="558.49" y="828.1" width="13.9" height="5.90" fill="#3ebc28"/>
<rect x="598.56" y="827.1" width="13.9" height="3.90" fill="#35a121"/>
<rect x="598.56" y="831" width="13.9" height="3.00" fill="#3ebc28"/>
<rect x="638.63" y="827.9" width="13.9" height="6.10" fill="#3ebc28"/>
<rect x="678.70" y="829.75" width="13.9" height="4.25" fill="#35a121"/>
<rect x="718.77" y="828" width="13.9" height="6.00" fill="#35a121"/>
<rect x="758.84" y="827" width="13.9" height="7.00" fill="#35a121"/>
<rect x="798.91" y="826.75" width="13.9" height="7.25" fill="#35a121"/>
<rect x="838.98" y="826" width="13.9" height="8.00" fill="#35a121"/>
<rect x="879.05" y="827.75" width="13.9" height="6.25" fill="#35a121"/>
<rect x="919.12" y="826.75" width="13.9" height="7.25" fill="#35a121"/>
<rect x="959.19" y="829" width="13.9" height="5.00" fill="#35a121"/>
<rect x="999.26" y="829" width="13.9" height="5.00" fill="#35a121"/>
<rect x="1039.33" y="828.75" width="13.9" height="5.25" fill="#35a121"/>
<rect x="1079.40" y="828.5" width="13.9" height="5.50" fill="#35a121"/>
<rect x="1119.47" y="828" width="13.9" height="6.00" fill="#35a121"/>
<rect x="1159.54" y="828" width="13.9" height="6.00" fill="#35a121"/>
<rect x="1199.61" y="829.5" width="13.9" height="4.50" fill="#35a121"/>
<rect x="1239.68" y="828" width="13.9" height="6.00" fill="#35a121"/>
<rect x="1279.75" y="438.5" width="13.9" height="395.50" fill="#3ebc28"/>
<rect x="1319.82" y="829.75" width="13.9" height="4.25" fill="#35a121"/>
<rect x="1359.89" y="800.8" width="13.9" height="6.20" fill="#35a121"/>
<rect x="1359.89" y="807" width="13.9" height="27.00" fill="#3ebc28"/>
<rect x="492.35" y="791.5" width="13.9" height="42.50" fill="#0a465e"/>
<rect x="532.42" y="666.2" width="13.9" height="167.80" fill="#0a465e"/>
<rect x="612.56" y="663.2" width="13.9" height="170.80" fill="#0a465e"/>
<rect x="692.70" y="669.4" width="13.9" height="164.60" fill="#0a465e"/>
<rect x="732.77" y="614" width="13.9" height="220.00" fill="#0a465e"/>
<rect x="772.84" y="576.2" width="13.9" height="257.80" fill="#0a465e"/>
<rect x="812.91" y="576.2" width="13.9" height="257.80" fill="#0a465e"/>
<rect x="852.98" y="539.1" width="13.9" height="294.90" fill="#0a465e"/>
<rect x="893.05" y="562.9" width="13.9" height="271.10" fill="#0a465e"/>
<rect x="933.12" y="600" width="13.9" height="234.00" fill="#0a465e"/>
<rect x="973.19" y="555.2" width="13.9" height="278.80" fill="#0a465e"/>
<rect x="1013.26" y="559.7" width="13.9" height="274.30" fill="#0a465e"/>
<rect x="1053.33" y="590" width="13.9" height="244.00" fill="#0a465e"/>
<rect x="1093.40" y="606.2" width="13.9" height="227.80" fill="#0a465e"/>
<rect x="1133.47" y="610.2" width="13.9" height="223.80" fill="#0a465e"/>
<rect x="1173.54" y="531" width="13.9" height="303.00" fill="#0a465e"/>
<rect x="1213.61" y="477.8" width="13.9" height="356.20" fill="#0a465e"/>
<rect x="1253.68" y="461" width="13.9" height="373.00" fill="#0a465e"/>
<rect x="1333.82" y="688.9" width="13.9" height="145.10" fill="#0a465e"/>
<rect x="1373.89" y="614.6" width="13.9" height="219.40" fill="#0a465e"/>
<path d="M468.2,834.0 H1434.5" stroke="#c2c2c2" stroke-width="1.2" fill="none"/>
<path d="M512.42,834.0 V839.3" stroke="#c2c2c2" stroke-width="1.2" fill="none"/>
<text x="497.60" y="853.8" font-size="12.3" fill="#222" textLength="29.65" lengthAdjust="spacingAndGlyphs">13:00</text>
<path d="M552.49,834.0 V839.3" stroke="#c2c2c2" stroke-width="1.2" fill="none"/>
<text x="537.66" y="853.8" font-size="12.3" fill="#222" textLength="29.65" lengthAdjust="spacingAndGlyphs">14:00</text>
<path d="M592.56,834.0 V839.3" stroke="#c2c2c2" stroke-width="1.2" fill="none"/>
<text x="577.74" y="853.8" font-size="12.3" fill="#222" textLength="29.65" lengthAdjust="spacingAndGlyphs">15:00</text>
<path d="M632.63,834.0 V839.3" stroke="#c2c2c2" stroke-width="1.2" fill="none"/>
<text x="617.80" y="853.8" font-size="12.3" fill="#222" textLength="29.65" lengthAdjust="spacingAndGlyphs">16:00</text>
<path d="M672.70,834.0 V839.3" stroke="#c2c2c2" stroke-width="1.2" fill="none"/>
<text x="657.88" y="853.8" font-size="12.3" fill="#222" textLength="29.65" lengthAdjust="spacingAndGlyphs">17:00</text>
<path d="M712.77,834.0 V839.3" stroke="#c2c2c2" stroke-width="1.2" fill="none"/>
<text x="697.94" y="853.8" font-size="12.3" fill="#222" textLength="29.65" lengthAdjust="spacingAndGlyphs">18:00</text>
<path d="M752.84,834.0 V839.3" stroke="#c2c2c2" stroke-width="1.2" fill="none"/>
<text x="738.01" y="853.8" font-size="12.3" fill="#222" textLength="29.65" lengthAdjust="spacingAndGlyphs">19:00</text>
<path d="M792.91,834.0 V839.3" stroke="#c2c2c2" stroke-width="1.2" fill="none"/>
<text x="776.56" y="853.8" font-size="12.3" fill="#222" textLength="32.70" lengthAdjust="spacingAndGlyphs">20:00</text>
<path d="M832.98,834.0 V839.3" stroke="#c2c2c2" stroke-width="1.2" fill="none"/>
<text x="818.15" y="853.8" font-size="12.3" fill="#222" textLength="29.65" lengthAdjust="spacingAndGlyphs">21:00</text>
<path d="M873.05,834.0 V839.3" stroke="#c2c2c2" stroke-width="1.2" fill="none"/>
<text x="856.70" y="853.8" font-size="12.3" fill="#222" textLength="32.70" lengthAdjust="spacingAndGlyphs">22:00</text>
<path d="M913.12,834.0 V839.3" stroke="#c2c2c2" stroke-width="1.2" fill="none"/>
<text x="896.77" y="853.8" font-size="12.3" fill="#222" textLength="32.70" lengthAdjust="spacingAndGlyphs">23:00</text>
<path d="M953.19,834.0 V839.3" stroke="#c2c2c2" stroke-width="1.2" fill="none"/>
<text x="936.84" y="853.8" font-size="12.3" fill="#222" textLength="32.70" lengthAdjust="spacingAndGlyphs">00:00</text>
<path d="M993.26,834.0 V839.3" stroke="#c2c2c2" stroke-width="1.2" fill="none"/>
<text x="978.43" y="853.8" font-size="12.3" fill="#222" textLength="29.65" lengthAdjust="spacingAndGlyphs">01:00</text>
<path d="M1033.33,834.0 V839.3" stroke="#c2c2c2" stroke-width="1.2" fill="none"/>
<text x="1016.98" y="853.8" font-size="12.3" fill="#222" textLength="32.70" lengthAdjust="spacingAndGlyphs">02:00</text>
<path d="M1073.40,834.0 V839.3" stroke="#c2c2c2" stroke-width="1.2" fill="none"/>
<text x="1057.05" y="853.8" font-size="12.3" fill="#222" textLength="32.70" lengthAdjust="spacingAndGlyphs">03:00</text>
<path d="M1113.47,834.0 V839.3" stroke="#c2c2c2" stroke-width="1.2" fill="none"/>
<text x="1097.12" y="853.8" font-size="12.3" fill="#222" textLength="32.70" lengthAdjust="spacingAndGlyphs">04:00</text>
<path d="M1153.54,834.0 V839.3" stroke="#c2c2c2" stroke-width="1.2" fill="none"/>
<text x="1137.19" y="853.8" font-size="12.3" fill="#222" textLength="32.70" lengthAdjust="spacingAndGlyphs">05:00</text>
<path d="M1193.61,834.0 V839.3" stroke="#c2c2c2" stroke-width="1.2" fill="none"/>
<text x="1177.26" y="853.8" font-size="12.3" fill="#222" textLength="32.70" lengthAdjust="spacingAndGlyphs">06:00</text>
<path d="M1233.68,834.0 V839.3" stroke="#c2c2c2" stroke-width="1.2" fill="none"/>
<text x="1217.33" y="853.8" font-size="12.3" fill="#222" textLength="32.70" lengthAdjust="spacingAndGlyphs">07:00</text>
<path d="M1273.75,834.0 V839.3" stroke="#c2c2c2" stroke-width="1.2" fill="none"/>
<text x="1257.40" y="853.8" font-size="12.3" fill="#222" textLength="32.70" lengthAdjust="spacingAndGlyphs">08:00</text>
<path d="M1313.82,834.0 V839.3" stroke="#c2c2c2" stroke-width="1.2" fill="none"/>
<text x="1297.47" y="853.8" font-size="12.3" fill="#222" textLength="32.70" lengthAdjust="spacingAndGlyphs">09:00</text>
<path d="M1353.89,834.0 V839.3" stroke="#c2c2c2" stroke-width="1.2" fill="none"/>
<text x="1339.06" y="853.8" font-size="12.3" fill="#222" textLength="29.65" lengthAdjust="spacingAndGlyphs">10:00</text>
<path d="M1393.96,834.0 V839.3" stroke="#c2c2c2" stroke-width="1.2" fill="none"/>
<text x="1380.66" y="853.8" font-size="12.3" fill="#222" textLength="26.60" lengthAdjust="spacingAndGlyphs">11:00</text>
<path d="M1434.03,834.0 V839.3" stroke="#c2c2c2" stroke-width="1.2" fill="none"/>
<text x="1419.21" y="853.8" font-size="12.3" fill="#222" textLength="29.65" lengthAdjust="spacingAndGlyphs">12:00</text>
<g fill="none" stroke="#1e1e1e" stroke-width="1.5" stroke-linecap="round" stroke-linejoin="round">
<circle cx="1195.8" cy="889" r="11.2"/>
<path d="M1190.2,889 H1201.3999999999999 M1190.2,889 L1194.5,884.5 M1190.2,889 L1194.5,893.5"/>
<circle cx="1275.8" cy="889" r="11.2"/>
<path d="M1270.2,889 H1281.3999999999999 M1281.3999999999999,889 L1277.1,884.5 M1281.3999999999999,889 L1277.1,893.5"/>
<circle cx="1371.8" cy="889" r="11.2"/>
<path d="M1371.8,895 V883 M1371.8,883 L1367.3,887.5 M1371.8,883 L1376.3,887.5"/>
<rect x="1226.2" y="880.6" width="19.4" height="19.8" rx="2"/>
<path d="M1226.2,884.7 H1245.6000000000001 M1231.2,877.6 V881 M1241.6000000000001,877.6 V881"/>
<rect x="1306" y="880.6" width="19.4" height="19.8" rx="2"/>
<path d="M1306,884.7 H1325.4 M1311,877.6 V881 M1321.4,877.6 V881"/>
<rect x="1309.7" y="888.7" width="5" height="5.2" rx="1"/>
<path d="M1343.6,872.6 V904.4" stroke-width="1.6" stroke-linecap="butt"/>
</g>
<path d="M1420.10,889.00 L1420.10,888.93 L1420.10,888.86 L1420.10,888.78 L1420.09,888.71 L1420.09,888.64 L1420.09,888.57 L1420.09,888.49 L1420.10,888.42 L1420.13,888.34 L1420.16,888.27 L1420.21,888.19 L1420.26,888.11 L1420.33,888.03 L1420.40,887.94 L1420.48,887.86 L1420.57,887.77 L1420.66,887.68 L1420.76,887.58 L1420.87,887.48 L1420.98,887.38 L1421.08,887.28 L1421.19,887.17 L1421.31,887.07 L1421.41,886.96 L1421.52,886.84 L1421.62,886.73 L1421.72,886.62 L1421.82,886.50 L1421.90,886.39 L1421.98,886.27 L1422.06,886.16 L1422.12,886.04 L1422.17,885.93 L1422.21,885.82 L1422.25,885.71 L1422.27,885.60 L1422.28,885.49 L1422.27,885.39 L1422.26,885.30 L1422.23,885.20 L1422.20,885.11 L1422.16,885.02 L1422.13,884.93 L1422.09,884.84 L1422.06,884.75 L1422.02,884.66 L1421.98,884.57 L1421.94,884.49 L1421.90,884.40 L1421.86,884.31 L1421.82,884.22 L1421.78,884.13 L1421.73,884.05 L1421.69,883.96 L1421.65,883.87 L1421.60,883.79 L1421.55,883.70 L1421.51,883.62 L1421.46,883.53 L1421.41,883.45 L1421.36,883.37 L1421.31,883.28 L1421.26,883.20 L1421.21,883.12 L1421.16,883.04 L1421.11,882.95 L1421.06,882.87 L1421.00,882.79 L1420.95,882.71 L1420.89,882.63 L1420.84,882.55 L1420.78,882.48 L1420.72,882.40 L1420.66,882.32 L1420.61,882.24 L1420.55,882.17 L1420.49,882.09 L1420.43,882.01 L1420.37,881.94 L1420.30,881.87 L1420.24,881.80 L1420.16,881.73 L1420.07,881.68 L1419.98,881.64 L1419.88,881.60 L1419.76,881.57 L1419.65,881.55 L1419.52,881.54 L1419.39,881.54 L1419.26,881.54 L1419.12,881.56 L1418.97,881.57 L1418.83,881.60 L1418.68,881.63 L1418.53,881.66 L1418.38,881.70 L1418.23,881.74 L1418.08,881.78 L1417.93,881.82 L1417.79,881.86 L1417.65,881.91 L1417.51,881.95 L1417.38,881.99 L1417.25,882.02 L1417.13,882.05 L1417.01,882.08 L1416.91,882.10 L1416.80,882.12 L1416.71,882.12 L1416.61,882.12 L1416.53,882.12 L1416.45,882.10 L1416.38,882.07 L1416.32,882.04 L1416.26,882.00 L1416.20,881.96 L1416.14,881.92 L1416.07,881.89 L1416.01,881.85 L1415.95,881.81 L1415.89,881.78 L1415.82,881.74 L1415.76,881.71 L1415.70,881.67 L1415.63,881.64 L1415.57,881.60 L1415.51,881.57 L1415.45,881.52 L1415.40,881.46 L1415.35,881.39 L1415.30,881.31 L1415.26,881.23 L1415.22,881.13 L1415.19,881.02 L1415.15,880.91 L1415.12,880.79 L1415.08,880.66 L1415.05,880.53 L1415.02,880.39 L1414.99,880.25 L1414.95,880.10 L1414.92,879.95 L1414.88,879.80 L1414.84,879.65 L1414.79,879.50 L1414.75,879.36 L1414.70,879.21 L1414.65,879.08 L1414.59,878.94 L1414.53,878.82 L1414.46,878.70 L1414.40,878.58 L1414.33,878.48 L1414.25,878.39 L1414.17,878.31 L1414.09,878.24 L1414.00,878.18 L1413.91,878.13 L1413.82,878.09 L1413.73,878.07 L1413.63,878.05 L1413.54,878.04 L1413.44,878.02 L1413.34,878.01 L1413.25,877.99 L1413.15,877.98 L1413.06,877.97 L1412.96,877.96 L1412.86,877.95 L1412.77,877.94 L1412.67,877.93 L1412.57,877.93 L1412.48,877.92 L1412.38,877.92 L1412.28,877.91 L1412.19,877.91 L1412.09,877.90 L1411.99,877.90 L1411.90,877.90 L1411.80,877.90 L1411.70,877.90 L1411.61,877.90 L1411.51,877.90 L1411.41,877.91 L1411.32,877.91 L1411.22,877.92 L1411.12,877.92 L1411.03,877.93 L1410.93,877.93 L1410.83,877.94 L1410.74,877.95 L1410.64,877.96 L1410.54,877.97 L1410.45,877.98 L1410.35,877.99 L1410.26,878.01 L1410.16,878.02 L1410.06,878.04 L1409.97,878.05 L1409.87,878.07 L1409.78,878.09 L1409.69,878.13 L1409.60,878.18 L1409.51,878.24 L1409.43,878.31 L1409.35,878.39 L1409.27,878.48 L1409.20,878.58 L1409.14,878.70 L1409.07,878.82 L1409.01,878.94 L1408.95,879.08 L1408.90,879.21 L1408.85,879.36 L1408.81,879.50 L1408.76,879.65 L1408.72,879.80 L1408.68,879.95 L1408.65,880.10 L1408.61,880.25 L1408.58,880.39 L1408.55,880.53 L1408.52,880.66 L1408.48,880.79 L1408.45,880.91 L1408.41,881.02 L1408.38,881.13 L1408.34,881.23 L1408.30,881.31 L1408.25,881.39 L1408.20,881.46 L1408.15,881.52 L1408.09,881.57 L1408.03,881.60 L1407.97,881.64 L1407.90,881.67 L1407.84,881.71 L1407.78,881.74 L1407.71,881.78 L1407.65,881.81 L1407.59,881.85 L1407.53,881.89 L1407.46,881.92 L1407.40,881.96 L1407.34,882.00 L1407.28,882.04 L1407.22,882.07 L1407.15,882.10 L1407.07,882.12 L1406.99,882.12 L1406.89,882.12 L1406.80,882.12 L1406.69,882.10 L1406.59,882.08 L1406.47,882.05 L1406.35,882.02 L1406.22,881.99 L1406.09,881.95 L1405.95,881.91 L1405.81,881.86 L1405.67,881.82 L1405.52,881.78 L1405.37,881.74 L1405.22,881.70 L1405.07,881.66 L1404.92,881.63 L1404.77,881.60 L1404.63,881.57 L1404.48,881.56 L1404.34,881.54 L1404.21,881.54 L1404.08,881.54 L1403.95,881.55 L1403.84,881.57 L1403.72,881.60 L1403.62,881.64 L1403.53,881.68 L1403.44,881.73 L1403.36,881.80 L1403.30,881.87 L1403.23,881.94 L1403.17,882.01 L1403.11,882.09 L1403.05,882.17 L1402.99,882.24 L1402.94,882.32 L1402.88,882.40 L1402.82,882.48 L1402.76,882.55 L1402.71,882.63 L1402.65,882.71 L1402.60,882.79 L1402.54,882.87 L1402.49,882.95 L1402.44,883.04 L1402.39,883.12 L1402.34,883.20 L1402.29,883.28 L1402.24,883.37 L1402.19,883.45 L1402.14,883.53 L1402.09,883.62 L1402.05,883.70 L1402.00,883.79 L1401.95,883.87 L1401.91,883.96 L1401.87,884.05 L1401.82,884.13 L1401.78,884.22 L1401.74,884.31 L1401.70,884.40 L1401.66,884.49 L1401.62,884.57 L1401.58,884.66 L1401.54,884.75 L1401.51,884.84 L1401.47,884.93 L1401.44,885.02 L1401.40,885.11 L1401.37,885.20 L1401.34,885.30 L1401.33,885.39 L1401.32,885.49 L1401.33,885.60 L1401.35,885.71 L1401.39,885.82 L1401.43,885.93 L1401.48,886.04 L1401.54,886.16 L1401.62,886.27 L1401.70,886.39 L1401.78,886.50 L1401.88,886.62 L1401.98,886.73 L1402.08,886.84 L1402.19,886.96 L1402.29,887.07 L1402.41,887.17 L1402.52,887.28 L1402.62,887.38 L1402.73,887.48 L1402.84,887.58 L1402.94,887.68 L1403.03,887.77 L1403.12,887.86 L1403.20,887.94 L1403.27,888.03 L1403.34,888.11 L1403.39,888.19 L1403.44,888.27 L1403.47,888.34 L1403.50,888.42 L1403.51,888.49 L1403.51,888.57 L1403.51,888.64 L1403.51,888.71 L1403.50,888.78 L1403.50,888.86 L1403.50,888.93 L1403.50,889.00 L1403.50,889.07 L1403.50,889.14 L1403.50,889.22 L1403.51,889.29 L1403.51,889.36 L1403.51,889.43 L1403.51,889.51 L1403.50,889.58 L1403.47,889.66 L1403.44,889.73 L1403.39,889.81 L1403.34,889.89 L1403.27,889.97 L1403.20,890.06 L1403.12,890.14 L1403.03,890.23 L1402.94,890.32 L1402.84,890.42 L1402.73,890.52 L1402.62,890.62 L1402.52,890.72 L1402.41,890.83 L1402.29,890.93 L1402.19,891.04 L1402.08,891.16 L1401.98,891.27 L1401.88,891.38 L1401.78,891.50 L1401.70,891.61 L1401.62,891.73 L1401.54,891.84 L1401.48,891.96 L1401.43,892.07 L1401.39,892.18 L1401.35,892.29 L1401.33,892.40 L1401.32,892.51 L1401.33,892.61 L1401.34,892.70 L1401.37,892.80 L1401.40,892.89 L1401.44,892.98 L1401.47,893.07 L1401.51,893.16 L1401.54,893.25 L1401.58,893.34 L1401.62,893.43 L1401.66,893.51 L1401.70,893.60 L1401.74,893.69 L1401.78,893.78 L1401.82,893.87 L1401.87,893.95 L1401.91,894.04 L1401.95,894.13 L1402.00,894.21 L1402.05,894.30 L1402.09,894.38 L1402.14,894.47 L1402.19,894.55 L1402.24,894.63 L1402.29,894.72 L1402.34,894.80 L1402.39,894.88 L1402.44,894.96 L1402.49,895.05 L1402.54,895.13 L1402.60,895.21 L1402.65,895.29 L1402.71,895.37 L1402.76,895.45 L1402.82,895.52 L1402.88,895.60 L1402.94,895.68 L1402.99,895.76 L1403.05,895.83 L1403.11,895.91 L1403.17,895.99 L1403.23,896.06 L1403.30,896.13 L1403.36,896.20 L1403.44,896.27 L1403.53,896.32 L1403.62,896.36 L1403.72,896.40 L1403.84,896.43 L1403.95,896.45 L1404.08,896.46 L1404.21,896.46 L1404.34,896.46 L1404.48,896.44 L1404.63,896.43 L1404.77,896.40 L1404.92,896.37 L1405.07,896.34 L1405.22,896.30 L1405.37,896.26 L1405.52,896.22 L1405.67,896.18 L1405.81,896.14 L1405.95,896.09 L1406.09,896.05 L1406.22,896.01 L1406.35,895.98 L1406.47,895.95 L1406.59,895.92 L1406.69,895.90 L1406.80,895.88 L1406.89,895.88 L1406.99,895.88 L1407.07,895.88 L1407.15,895.90 L1407.22,895.93 L1407.28,895.96 L1407.34,896.00 L1407.40,896.04 L1407.46,896.08 L1407.53,896.11 L1407.59,896.15 L1407.65,896.19 L1407.71,896.22 L1407.78,896.26 L1407.84,896.29 L1407.90,896.33 L1407.97,896.36 L1408.03,896.40 L1408.09,896.43 L1408.15,896.48 L1408.20,896.54 L1408.25,896.61 L1408.30,896.69 L1408.34,896.77 L1408.38,896.87 L1408.41,896.98 L1408.45,897.09 L1408.48,897.21 L1408.52,897.34 L1408.55,897.47 L1408.58,897.61 L1408.61,897.75 L1408.65,897.90 L1408.68,898.05 L1408.72,898.20 L1408.76,898.35 L1408.81,898.50 L1408.85,898.64 L1408.90,898.79 L1408.95,898.92 L1409.01,899.06 L1409.07,899.18 L1409.14,899.30 L1409.20,899.42 L1409.27,899.52 L1409.35,899.61 L1409.43,899.69 L1409.51,899.76 L1409.60,899.82 L1409.69,899.87 L1409.78,899.91 L1409.87,899.93 L1409.97,899.95 L1410.06,899.96 L1410.16,899.98 L1410.26,899.99 L1410.35,900.01 L1410.45,900.02 L1410.54,900.03 L1410.64,900.04 L1410.74,900.05 L1410.83,900.06 L1410.93,900.07 L1411.03,900.07 L1411.12,900.08 L1411.22,900.08 L1411.32,900.09 L1411.41,900.09 L1411.51,900.10 L1411.61,900.10 L1411.70,900.10 L1411.80,900.10 L1411.90,900.10 L1411.99,900.10 L1412.09,900.10 L1412.19,900.09 L1412.28,900.09 L1412.38,900.08 L1412.48,900.08 L1412.57,900.07 L1412.67,900.07 L1412.77,900.06 L1412.86,900.05 L1412.96,900.04 L1413.06,900.03 L1413.15,900.02 L1413.25,900.01 L1413.34,899.99 L1413.44,899.98 L1413.54,899.96 L1413.63,899.95 L1413.73,899.93 L1413.82,899.91 L1413.91,899.87 L1414.00,899.82 L1414.09,899.76 L1414.17,899.69 L1414.25,899.61 L1414.33,899.52 L1414.40,899.42 L1414.46,899.30 L1414.53,899.18 L1414.59,899.06 L1414.65,898.92 L1414.70,898.79 L1414.75,898.64 L1414.79,898.50 L1414.84,898.35 L1414.88,898.20 L1414.92,898.05 L1414.95,897.90 L1414.99,897.75 L1415.02,897.61 L1415.05,897.47 L1415.08,897.34 L1415.12,897.21 L1415.15,897.09 L1415.19,896.98 L1415.22,896.87 L1415.26,896.77 L1415.30,896.69 L1415.35,896.61 L1415.40,896.54 L1415.45,896.48 L1415.51,896.43 L1415.57,896.40 L1415.63,896.36 L1415.70,896.33 L1415.76,896.29 L1415.82,896.26 L1415.89,896.22 L1415.95,896.19 L1416.01,896.15 L1416.07,896.11 L1416.14,896.08 L1416.20,896.04 L1416.26,896.00 L1416.32,895.96 L1416.38,895.93 L1416.45,895.90 L1416.53,895.88 L1416.61,895.88 L1416.71,895.88 L1416.80,895.88 L1416.91,895.90 L1417.01,895.92 L1417.13,895.95 L1417.25,895.98 L1417.38,896.01 L1417.51,896.05 L1417.65,896.09 L1417.79,896.14 L1417.93,896.18 L1418.08,896.22 L1418.23,896.26 L1418.38,896.30 L1418.53,896.34 L1418.68,896.37 L1418.83,896.40 L1418.97,896.43 L1419.12,896.44 L1419.26,896.46 L1419.39,896.46 L1419.52,896.46 L1419.65,896.45 L1419.76,896.43 L1419.88,896.40 L1419.98,896.36 L1420.07,896.32 L1420.16,896.27 L1420.24,896.20 L1420.30,896.13 L1420.37,896.06 L1420.43,895.99 L1420.49,895.91 L1420.55,895.83 L1420.61,895.76 L1420.66,895.68 L1420.72,895.60 L1420.78,895.52 L1420.84,895.45 L1420.89,895.37 L1420.95,895.29 L1421.00,895.21 L1421.06,895.13 L1421.11,895.05 L1421.16,894.96 L1421.21,894.88 L1421.26,894.80 L1421.31,894.72 L1421.36,894.63 L1421.41,894.55 L1421.46,894.47 L1421.51,894.38 L1421.55,894.30 L1421.60,894.21 L1421.65,894.13 L1421.69,894.04 L1421.73,893.95 L1421.78,893.87 L1421.82,893.78 L1421.86,893.69 L1421.90,893.60 L1421.94,893.51 L1421.98,893.43 L1422.02,893.34 L1422.06,893.25 L1422.09,893.16 L1422.13,893.07 L1422.16,892.98 L1422.20,892.89 L1422.23,892.80 L1422.26,892.70 L1422.27,892.61 L1422.28,892.51 L1422.27,892.40 L1422.25,892.29 L1422.21,892.18 L1422.17,892.07 L1422.12,891.96 L1422.06,891.84 L1421.98,891.73 L1421.90,891.61 L1421.82,891.50 L1421.72,891.38 L1421.62,891.27 L1421.52,891.16 L1421.41,891.04 L1421.31,890.93 L1421.19,890.83 L1421.08,890.72 L1420.98,890.62 L1420.87,890.52 L1420.76,890.42 L1420.66,890.32 L1420.57,890.23 L1420.48,890.14 L1420.40,890.06 L1420.33,889.97 L1420.26,889.89 L1420.21,889.81 L1420.16,889.73 L1420.13,889.66 L1420.10,889.58 L1420.09,889.51 L1420.09,889.43 L1420.09,889.36 L1420.09,889.29 L1420.10,889.22 L1420.10,889.14 L1420.10,889.07 L1420.10,889.00 L1420.10,888.93 Z" fill="none" stroke="#1e1e1e" stroke-width="1.55" stroke-linejoin="round"/><circle cx="1411.8" cy="889" r="3.1" fill="none" stroke="#1e1e1e" stroke-width="1.55"/>
<defs><clipPath id="mclip"><rect x="893" y="67" width="573" height="205" rx="3"/></clipPath>
<pattern id="bld" width="30" height="26" patternUnits="userSpaceOnUse" patternTransform="rotate(42)"><rect width="30" height="26" fill="#e0dfde"/><rect x="0.0" y="0.5" width="3.5" height="5.1" fill="#dcd2ca" stroke="#cdbfb4" stroke-width="0.6"/><rect x="3.5" y="0.5" width="5.7" height="3.8" fill="#dcd2ca" stroke="#cdbfb4" stroke-width="0.6"/><rect x="9.1" y="0.5" width="4.7" height="4.2" fill="#dcd2ca" stroke="#cdbfb4" stroke-width="0.6"/><rect x="13.9" y="0.5" width="5.3" height="5.0" fill="#dcd2ca" stroke="#cdbfb4" stroke-width="0.6"/><rect x="19.2" y="0.5" width="3.3" height="3.3" fill="#dcd2ca" stroke="#cdbfb4" stroke-width="0.6"/><rect x="22.5" y="0.5" width="5.9" height="4.2" fill="#dcd2ca" stroke="#cdbfb4" stroke-width="0.6"/><rect x="28.4" y="0.5" width="1.6" height="3.2" fill="#dcd2ca" stroke="#cdbfb4" stroke-width="0.6"/><rect x="10.7" y="7.1" width="4.3" height="3.1" fill="#dcd2ca" stroke="#cdbfb4" stroke-width="0.6"/><rect x="21.6" y="6.6" width="2.6" height="2.6" fill="#dcd2ca" stroke="#cdbfb4" stroke-width="0.6"/><rect x="0.0" y="13.5" width="6.3" height="4.1" fill="#dcd2ca" stroke="#cdbfb4" stroke-width="0.6"/><rect x="6.3" y="13.5" width="3.8" height="4.2" fill="#dcd2ca" stroke="#cdbfb4" stroke-width="0.6"/><rect x="10.0" y="13.5" width="3.1" height="3.7" fill="#dcd2ca" stroke="#cdbfb4" stroke-width="0.6"/><rect x="13.1" y="13.5" width="4.5" height="4.3" fill="#dcd2ca" stroke="#cdbfb4" stroke-width="0.6"/><rect x="17.7" y="13.5" width="3.8" height="3.7" fill="#dcd2ca" stroke="#cdbfb4" stroke-width="0.6"/><rect x="21.5" y="13.5" width="3.8" height="4.3" fill="#dcd2ca" stroke="#cdbfb4" stroke-width="0.6"/><rect x="25.3" y="13.5" width="4.0" height="3.2" fill="#dcd2ca" stroke="#cdbfb4" stroke-width="0.6"/><rect x="29.3" y="13.5" width="0.7" height="4.5" fill="#dcd2ca" stroke="#cdbfb4" stroke-width="0.6"/><rect x="15.4" y="22.0" width="3.0" height="3.0" fill="#dcd2ca" stroke="#cdbfb4" stroke-width="0.6"/><rect x="2.9" y="21.3" width="3.3" height="2.9" fill="#dcd2ca" stroke="#cdbfb4" stroke-width="0.6"/></pattern>
<pattern id="bld2" width="30" height="26" patternUnits="userSpaceOnUse" patternTransform="rotate(-35)"><rect width="30" height="26" fill="#e0dfde"/><rect x="0.0" y="0.5" width="6.3" height="5.4" fill="#dcd2ca" stroke="#cdbfb4" stroke-width="0.6"/><rect x="6.3" y="0.5" width="3.2" height="3.4" fill="#dcd2ca" stroke="#cdbfb4" stroke-width="0.6"/><rect x="9.5" y="0.5" width="5.9" height="4.9" fill="#dcd2ca" stroke="#cdbfb4" stroke-width="0.6"/><rect x="15.5" y="0.5" width="5.3" height="3.9" fill="#dcd2ca" stroke="#cdbfb4" stroke-width="0.6"/><rect x="20.8" y="0.5" width="5.1" height="4.6" fill="#dcd2ca" stroke="#cdbfb4" stroke-width="0.6"/><rect x="25.9" y="0.5" width="4.1" height="3.6" fill="#dcd2ca" stroke="#cdbfb4" stroke-width="0.6"/><rect x="10.3" y="8.3" width="3.5" height="3.2" fill="#dcd2ca" stroke="#cdbfb4" stroke-width="0.6"/><rect x="22.8" y="7.6" width="3.9" height="2.3" fill="#dcd2ca" stroke="#cdbfb4" stroke-width="0.6"/><rect x="0.0" y="13.5" width="3.1" height="3.3" fill="#dcd2ca" stroke="#cdbfb4" stroke-width="0.6"/><rect x="3.1" y="13.5" width="4.6" height="3.9" fill="#dcd2ca" stroke="#cdbfb4" stroke-width="0.6"/><rect x="7.8" y="13.5" width="4.3" height="5.3" fill="#dcd2ca" stroke="#cdbfb4" stroke-width="0.6"/><rect x="12.1" y="13.5" width="4.8" height="4.5" fill="#dcd2ca" stroke="#cdbfb4" stroke-width="0.6"/><rect x="16.9" y="13.5" width="3.8" height="3.3" fill="#dcd2ca" stroke="#cdbfb4" stroke-width="0.6"/><rect x="20.7" y="13.5" width="4.1" height="3.5" fill="#dcd2ca" stroke="#cdbfb4" stroke-width="0.6"/><rect x="24.9" y="13.5" width="4.8" height="5.5" fill="#dcd2ca" stroke="#cdbfb4" stroke-width="0.6"/><rect x="16.2" y="21.7" width="3.0" height="3.0" fill="#dcd2ca" stroke="#cdbfb4" stroke-width="0.6"/><rect x="17.6" y="21.4" width="4.8" height="2.9" fill="#dcd2ca" stroke="#cdbfb4" stroke-width="0.6"/></pattern>
<pattern id="bld3" width="26" height="22" patternUnits="userSpaceOnUse" patternTransform="rotate(12)"><rect width="26" height="22" fill="#e0dfde"/><rect x="0.0" y="0.5" width="3.8" height="4.5" fill="#dcd2ca" stroke="#cdbfb4" stroke-width="0.6"/><rect x="3.8" y="0.5" width="4.3" height="4.6" fill="#dcd2ca" stroke="#cdbfb4" stroke-width="0.6"/><rect x="8.1" y="0.5" width="5.2" height="3.4" fill="#dcd2ca" stroke="#cdbfb4" stroke-width="0.6"/><rect x="13.3" y="0.5" width="3.0" height="5.1" fill="#dcd2ca" stroke="#cdbfb4" stroke-width="0.6"/><rect x="16.4" y="0.5" width="3.9" height="3.7" fill="#dcd2ca" stroke="#cdbfb4" stroke-width="0.6"/><rect x="20.3" y="0.5" width="5.7" height="4.3" fill="#dcd2ca" stroke="#cdbfb4" stroke-width="0.6"/><rect x="16.7" y="8.1" width="3.7" height="2.2" fill="#dcd2ca" stroke="#cdbfb4" stroke-width="0.6"/><rect x="12.7" y="7.8" width="4.7" height="2.9" fill="#dcd2ca" stroke="#cdbfb4" stroke-width="0.6"/><rect x="0.0" y="13.5" width="5.3" height="3.3" fill="#dcd2ca" stroke="#cdbfb4" stroke-width="0.6"/><rect x="5.3" y="13.5" width="5.7" height="4.6" fill="#dcd2ca" stroke="#cdbfb4" stroke-width="0.6"/><rect x="11.0" y="13.5" width="4.1" height="3.3" fill="#dcd2ca" stroke="#cdbfb4" stroke-width="0.6"/><rect x="15.1" y="13.5" width="6.0" height="4.3" fill="#dcd2ca" stroke="#cdbfb4" stroke-width="0.6"/><rect x="21.1" y="13.5" width="4.9" height="5.2" fill="#dcd2ca" stroke="#cdbfb4" stroke-width="0.6"/><rect x="14.3" y="20.5" width="4.8" height="3.0" fill="#dcd2ca" stroke="#cdbfb4" stroke-width="0.6"/><rect x="8.9" y="21.7" width="4.8" height="2.1" fill="#dcd2ca" stroke="#cdbfb4" stroke-width="0.6"/></pattern>
</defs>
<g clip-path="url(#mclip)">
<rect x="893" y="67" width="573" height="205" fill="url(#bld2)"/>
<polygon points="958.0,67.0 1192.0,67.0 1140.0,168.0 1108.0,235.0 1101.0,272.0 1062.0,230.0 1026.0,192.0 1009.0,168.0 986.0,121.0" fill="url(#bld)"/>
<polygon points="1264.0,272.0 1266.0,230.0 1285.0,195.0 1320.0,160.0 1380.0,128.0 1466.0,86.0 1466.0,272.0" fill="url(#bld3)"/>
<polygon points="940.3,163.8 977.0,138.0 996.3,153.0 1022.0,198.3 987.7,217.6 968.3,222.0 955.4,206.9" fill="#f2dcdc"/>
<polygon points="936.0,84.0 962.0,80.0 968.0,98.0 940.0,104.0" fill="#f2dcdc"/>
<polygon points="955.4,176.7 970.5,170.3 983.4,196.1 974.8,204.7" fill="#d8cbc0" stroke="#c4b4a7" stroke-width="0.7"/>
<polygon points="970.5,170.3 978.0,167.0 990.0,196.0 981.0,210.0 974.8,204.7 983.4,196.1" fill="#ebe7e5"/>
<polygon points="980.0,150.0 988.0,147.0 1001.0,176.0 993.0,180.0" fill="#d8cbc0" stroke="#c4b4a7" stroke-width="0.7"/>
<polygon points="998.0,176.0 1006.0,173.0 1015.0,198.0 1007.0,201.0" fill="#d8cbc0" stroke="#c4b4a7" stroke-width="0.7"/>
<polygon points="918.8,135.9 957.6,116.5 974.8,144.5 938.2,163.8" fill="#d8f6d8" stroke="#b5e2b0" stroke-width="0.6"/>
<polygon points="920.0,138.0 940.0,129.5 942.0,136.0 924.0,145.0" fill="#86dbb8"/>
<polygon points="932.8,142.3 961.8,129.4 967.2,146.6 941.4,160.6" fill="#86dbb8"/>
<polygon points="1010.0,82.0 1030.0,71.0 1038.0,90.0 1018.0,98.0" fill="#d8f6d8"/>
<polygon points="893.0,153.0 905.0,150.0 906.0,157.0 894.0,161.0" fill="#d8f6d8"/>
<polygon points="1087.0,202.0 1096.0,198.0 1105.0,214.0 1097.0,216.0" fill="#d0f2c8"/>
<polygon points="978.0,260.0 1000.0,254.0 1006.0,272.0 980.0,272.0" fill="#aee6c6"/>
<polygon points="1226.0,67.0 1301.0,67.0 1260.0,106.0 1237.0,129.0 1211.0,140.0 1200.0,153.0 1180.0,174.0 1176.0,160.0" fill="#e6e2e2"/>
<polygon points="1240.0,67.0 1290.0,67.0 1250.0,110.0 1222.0,128.0" fill="#ccc9c9"/>
<polygon points="1290.0,67.0 1301.0,67.0 1262.0,106.0 1252.0,108.0" fill="#e8dae8"/>
<polygon points="1202.0,153.0 1243.0,140.0 1290.0,152.0 1278.0,170.0 1260.0,188.0 1252.0,207.0 1245.0,231.0 1243.0,272.0 1160.0,272.0 1166.0,240.0 1180.0,222.0 1198.0,207.0 1206.0,192.0 1210.0,170.0" fill="#ebe8e6"/>
<polygon points="1170.0,215.0 1190.0,200.0 1198.0,185.0 1190.0,230.0 1170.0,250.0" fill="#d3ecc0"/>
<polygon points="1291.0,67.0 1345.0,67.0 1338.0,73.0 1290.0,112.0 1270.0,128.0 1243.0,138.0 1214.0,144.0 1207.0,150.0 1201.0,152.0 1211.0,140.0 1236.0,129.0 1260.0,106.0" fill="#aad3df"/>
<polygon points="1425.0,67.0 1466.0,67.0 1466.0,80.0 1442.0,88.0 1388.0,119.0 1334.0,142.8 1300.0,150.0 1286.0,150.0 1276.0,142.0 1317.9,135.2 1374.2,99.5" fill="#aad3df"/>
<polygon points="1320.0,67.0 1335.0,67.0 1320.0,75.0" fill="#aad3df"/>
<polygon points="1286.0,146.0 1322.0,148.0 1310.0,168.0 1286.0,192.0 1271.0,218.0 1265.0,243.0 1264.0,272.0 1243.0,272.0 1245.5,231.0 1252.0,207.0 1260.6,187.6 1278.0,170.0 1290.0,152.0" fill="#aad3df"/>
<polyline points="1206.0,148.0 1211.0,170.0 1207.0,192.0 1196.0,208.0 1178.0,222.0 1165.0,242.0 1159.0,272.0" fill="none" stroke="#aad3df" stroke-width="17" stroke-linejoin="round"/>
<polyline points="1208.0,148.0 1212.0,166.0" fill="none" stroke="#aad3df" stroke-width="10"/>
<polygon points="1268.0,139.0 1282.0,126.0 1300.0,120.0 1292.0,135.0 1276.0,141.0" fill="#cfecb2"/>
<polygon points="1237.0,182.0 1250.0,176.0 1246.0,188.0 1239.0,190.0" fill="#cfecb2"/>
<polygon points="1262.0,169.0 1280.0,163.0 1276.0,176.0 1265.0,180.0" fill="#cfecb2"/>
<polygon points="1286.0,121.0 1345.0,73.0 1350.0,67.0 1425.0,67.0 1374.2,99.5 1317.9,135.2 1276.0,142.0" fill="#e3dfde"/>
<polygon points="1287.0,123.0 1326.0,95.0 1331.0,100.0 1292.0,128.0" fill="#d9cec5" stroke="#c9b9ad" stroke-width="0.7"/>
<polygon points="1335.0,78.0 1350.0,67.0 1380.0,67.0 1340.0,83.0" fill="#d9cec5" stroke="#c9b9ad" stroke-width="0.7"/>
<polygon points="1333.0,90.0 1378.0,67.0 1392.0,67.0 1338.0,95.0" fill="#d9cec5" stroke="#c9b9ad" stroke-width="0.7"/>
<polygon points="1300.0,112.0 1318.0,100.0 1322.0,106.0 1305.0,118.0" fill="#d9cec5" stroke="#c9b9ad" stroke-width="0.7"/>
<polygon points="1288.0,116.0 1330.0,84.0 1336.0,89.0 1294.0,121.0" fill="#d6c9be" stroke="#c6b5a8" stroke-width="0.7"/>
<polyline points="1292.0,130.0 1330.0,108.0 1372.0,84.0 1395.0,70.0" fill="none" stroke="#f4f4f4" stroke-width="2.6" stroke-dasharray="1.3,1.3"/>
<polyline points="1318.0,134.0 1350.0,116.0 1376.0,99.0 1428.0,67.0" fill="none" stroke="#d8ecf2" stroke-width="3.2" stroke-dasharray="1.2,1.4"/>
<polygon points="1375.0,92.0 1392.0,84.0 1394.0,88.0 1378.0,96.0" fill="none" stroke="#8fc3dc" stroke-width="1"/>
<polyline points="893.0,140.2 901.6,131.6 938.2,103.6 968.3,97.1 979.0,101.4" fill="none" stroke="#ffffff" stroke-width="3.4" stroke-linejoin="round" stroke-linecap="round"/>
<polyline points="979.0,101.4 1030.7,73.5 1040.0,67.0" fill="none" stroke="#ffffff" stroke-width="3.4" stroke-linejoin="round" stroke-linecap="round"/>
<polyline points="996.3,133.7 1043.0,105.7 1120.0,67.0" fill="none" stroke="#ffffff" stroke-width="3.4" stroke-linejoin="round" stroke-linecap="round"/>
<polyline points="893.0,183.2 925.3,166.0 959.7,222.0" fill="none" stroke="#ffffff" stroke-width="3.4" stroke-linejoin="round" stroke-linecap="round"/>
<polyline points="903.8,183.2 914.5,228.4" fill="none" stroke="#ffffff" stroke-width="3.4" stroke-linejoin="round" stroke-linecap="round"/>
<polyline points="906.0,206.9 942.5,194.0" fill="none" stroke="#ffffff" stroke-width="3.4" stroke-linejoin="round" stroke-linecap="round"/>
<polyline points="910.2,226.2 949.0,213.3" fill="none" stroke="#ffffff" stroke-width="3.4" stroke-linejoin="round" stroke-linecap="round"/>
<polyline points="893.0,118.0 905.0,112.0" fill="none" stroke="#ffffff" stroke-width="3.4" stroke-linejoin="round" stroke-linecap="round"/>
<polyline points="1022.0,129.4 1083.8,148.8 1100.0,152.0" fill="none" stroke="#ffffff" stroke-width="3.4" stroke-linejoin="round" stroke-linecap="round"/>
<polyline points="1017.8,153.0 1043.0,166.0" fill="none" stroke="#ffffff" stroke-width="3.4" stroke-linejoin="round" stroke-linecap="round"/>
<polyline points="1030.0,71.3 1049.4,88.5 1092.4,131.6 1137.6,181.0" fill="none" stroke="#ffffff" stroke-width="3.4" stroke-linejoin="round" stroke-linecap="round"/>
<polyline points="1051.5,67.0 1157.0,129.4" fill="none" stroke="#ffffff" stroke-width="3.4" stroke-linejoin="round" stroke-linecap="round"/>
<polyline points="1120.4,67.0 1176.3,110.0" fill="none" stroke="#ffffff" stroke-width="3.4" stroke-linejoin="round" stroke-linecap="round"/>
<polyline points="1090.3,105.7 1144.0,150.9" fill="none" stroke="#ffffff" stroke-width="3.4" stroke-linejoin="round" stroke-linecap="round"/>
<polyline points="1036.5,198.3 1116.0,67.0" fill="none" stroke="#ffffff" stroke-width="3.4" stroke-linejoin="round" stroke-linecap="round"/>
<polyline points="1051.5,183.2 1109.6,217.6 1144.0,226.2 1168.0,232.0" fill="none" stroke="#ffffff" stroke-width="3.4" stroke-linejoin="round" stroke-linecap="round"/>
<polyline points="1086.0,200.4 1116.0,163.8 1135.0,128.0" fill="none" stroke="#ffffff" stroke-width="3.4" stroke-linejoin="round" stroke-linecap="round"/>
<polyline points="1030.0,101.4 1051.5,90.7" fill="none" stroke="#ffffff" stroke-width="3.4" stroke-linejoin="round" stroke-linecap="round"/>
<polyline points="1073.0,166.0 1094.6,183.2" fill="none" stroke="#ffffff" stroke-width="3.4" stroke-linejoin="round" stroke-linecap="round"/>
<polyline points="1232.6,187.6 1282.0,153.0" fill="none" stroke="#ffffff" stroke-width="3.4" stroke-linejoin="round" stroke-linecap="round"/>
<polyline points="1269.0,248.5 1466.0,250.0" fill="none" stroke="#ffffff" stroke-width="3.4" stroke-linejoin="round" stroke-linecap="round"/>
<polyline points="1267.0,215.0 1320.0,201.5 1432.0,222.0 1466.0,228.0" fill="none" stroke="#ffffff" stroke-width="3.4" stroke-linejoin="round" stroke-linecap="round"/>
<polyline points="1300.0,172.0 1345.8,153.0 1440.5,194.0 1466.0,200.0" fill="none" stroke="#ffffff" stroke-width="3.4" stroke-linejoin="round" stroke-linecap="round"/>
<polyline points="1326.5,272.0 1363.0,153.0 1376.0,131.0" fill="none" stroke="#ffffff" stroke-width="3.4" stroke-linejoin="round" stroke-linecap="round"/>
<polyline points="1365.0,272.0 1384.6,170.3 1423.3,129.4 1432.0,119.0" fill="none" stroke="#ffffff" stroke-width="3.4" stroke-linejoin="round" stroke-linecap="round"/>
<polyline points="1423.3,272.0 1453.4,174.6 1457.7,99.3 1449.0,95.0" fill="none" stroke="#ffffff" stroke-width="3.4" stroke-linejoin="round" stroke-linecap="round"/>
<polyline points="1449.0,185.4 1466.0,185.4" fill="none" stroke="#ffffff" stroke-width="3.4" stroke-linejoin="round" stroke-linecap="round"/>
<polyline points="1410.0,121.0 1458.0,110.0" fill="none" stroke="#ffffff" stroke-width="3.4" stroke-linejoin="round" stroke-linecap="round"/>
<polyline points="1290.0,236.0 1330.0,240.0" fill="none" stroke="#ffffff" stroke-width="3.4" stroke-linejoin="round" stroke-linecap="round"/>
<polyline points="1400.0,150.0 1420.0,180.0" fill="none" stroke="#ffffff" stroke-width="3.4" stroke-linejoin="round" stroke-linecap="round"/>
<polyline points="1215.3,272.0 1219.7,196.2 1230.4,174.6 1260.6,157.4 1295.0,148.8" fill="none" stroke="#ffffff" stroke-width="6" stroke-linejoin="round"/>
<polyline points="893.0,250.0 930.0,235.0" fill="none" stroke="#f3a597" stroke-width="1" stroke-dasharray="1.6,1.6"/>
<polyline points="1000.0,265.0 1040.0,240.0" fill="none" stroke="#f3a597" stroke-width="1" stroke-dasharray="1.6,1.6"/>
<polyline points="1150.0,240.0 1210.0,230.0" fill="none" stroke="#f3a597" stroke-width="1" stroke-dasharray="1.6,1.6"/>
<polyline points="1120.0,200.0 1168.0,180.0" fill="none" stroke="#f3a597" stroke-width="1" stroke-dasharray="1.6,1.6"/>
<polyline points="1270.0,160.0 1330.0,140.0" fill="none" stroke="#f3a597" stroke-width="1" stroke-dasharray="1.6,1.6"/>
<polyline points="1340.0,180.0 1440.0,150.0" fill="none" stroke="#f3a597" stroke-width="1" stroke-dasharray="1.6,1.6"/>
<polyline points="1380.0,200.0 1400.0,140.0" fill="none" stroke="#f3a597" stroke-width="1" stroke-dasharray="1.6,1.6"/>
<polyline points="1300.0,250.0 1460.0,262.0" fill="none" stroke="#f3a597" stroke-width="1" stroke-dasharray="1.6,1.6"/>
<polyline points="1220.0,200.0 1235.0,272.0" fill="none" stroke="#f3a597" stroke-width="1" stroke-dasharray="1.6,1.6"/>
<polyline points="1250.0,140.0 1300.0,120.0" fill="none" stroke="#f3a597" stroke-width="1" stroke-dasharray="1.6,1.6"/>
<polyline points="1330.0,90.0 1380.0,70.0" fill="none" stroke="#f3a597" stroke-width="1" stroke-dasharray="1.6,1.6"/>
<polyline points="900.0,100.0 920.0,70.0" fill="none" stroke="#f3a597" stroke-width="1" stroke-dasharray="1.6,1.6"/>
<polyline points="1060.0,250.0 1100.0,230.0" fill="none" stroke="#f3a597" stroke-width="1" stroke-dasharray="1.6,1.6"/>
<polyline points="1398.0,160.0 1395.0,272.0" fill="none" stroke="#f3a597" stroke-width="1" stroke-dasharray="1.6,1.6"/>
<polyline points="1410.0,200.0 1440.0,120.0" fill="none" stroke="#f3a597" stroke-width="1" stroke-dasharray="1.6,1.6"/>
<polyline points="1245.5,67.0 1180.0,183.0 1115.0,272.0" fill="none" stroke="#b3b3b3" stroke-width="9"/>
<polyline points="1245.5,67.0 1180.0,183.0 1115.0,272.0" fill="none" stroke="#808080" stroke-width="1.1" stroke-dasharray="2.5,1.5" transform="translate(-2,0)"/>
<polyline points="1245.5,67.0 1180.0,183.0 1115.0,272.0" fill="none" stroke="#808080" stroke-width="1.1" stroke-dasharray="2.5,1.5" transform="translate(2,1)"/>
<polyline points="921.0,252.0 953.3,232.7 979.0,225.2 1043.0,226.2 1060.0,229.0" fill="none" stroke="#d7da9a" stroke-width="9.7" stroke-linejoin="round"/>
<polyline points="921.0,252.0 953.3,232.7 979.0,225.2 1043.0,226.2 1060.0,229.0" fill="none" stroke="#f5f8bf" stroke-width="8.5" stroke-linejoin="round"/>
<polyline points="893.0,206.9 912.4,256.4 925.0,272.0" fill="none" stroke="#d7da9a" stroke-width="7.7" stroke-linejoin="round"/>
<polyline points="893.0,206.9 912.4,256.4 925.0,272.0" fill="none" stroke="#f5f8bf" stroke-width="6.5" stroke-linejoin="round"/>
<polyline points="893.0,73.5 912.0,67.0" fill="none" stroke="#d7da9a" stroke-width="8.2" stroke-linejoin="round"/>
<polyline points="893.0,73.5 912.0,67.0" fill="none" stroke="#f5f8bf" stroke-width="7" stroke-linejoin="round"/>
<polyline points="1168.0,125.0 1196.0,140.2 1243.3,168.2 1260.6,161.7 1286.4,144.5 1303.6,141.3 1333.8,151.0 1340.0,153.0" fill="none" stroke="#d7da9a" stroke-width="8.2" stroke-linejoin="round"/>
<polyline points="1168.0,125.0 1196.0,140.2 1243.3,168.2 1260.6,161.7 1286.4,144.5 1303.6,141.3 1333.8,151.0 1340.0,153.0" fill="none" stroke="#f5f8bf" stroke-width="7" stroke-linejoin="round"/>
<polyline points="1335.0,151.0 1385.0,127.0 1427.6,103.6 1470.0,84.0" fill="none" stroke="#d7da9a" stroke-width="8.2" stroke-linejoin="round"/>
<polyline points="1335.0,151.0 1385.0,127.0 1427.6,103.6 1470.0,84.0" fill="none" stroke="#f5f8bf" stroke-width="7" stroke-linejoin="round"/>
<polyline points="1340.0,152.0 1323.0,174.6 1295.0,200.5 1273.5,224.2 1267.0,250.0 1267.0,272.0" fill="none" stroke="#d7da9a" stroke-width="8.2" stroke-linejoin="round"/>
<polyline points="1340.0,152.0 1323.0,174.6 1295.0,200.5 1273.5,224.2 1267.0,250.0 1267.0,272.0" fill="none" stroke="#f5f8bf" stroke-width="7" stroke-linejoin="round"/>
<polyline points="1196.0,140.2 1243.3,168.2" fill="none" stroke="#555" stroke-width="0.8" transform="translate(0,3.6)"/>
<circle cx="912.4" cy="256.4" r="9.5" fill="none" stroke="#f5f8bf" stroke-width="6.5"/>
<circle cx="912.4" cy="256.4" r="4.2" fill="#c5dfa6" stroke="#aac28c" stroke-width="0.6"/>
<polyline points="955.4,60.0 985.5,120.8 1009.2,168.1 1027.0,191.8 1049.0,217.6 1072.0,240.0 1094.6,262.0 1101.0,275.0" fill="none" stroke="#e2b57c" stroke-width="10.7" stroke-linejoin="round"/>
<polyline points="955.4,60.0 985.5,120.8 1009.2,168.1 1027.0,191.8 1049.0,217.6 1072.0,240.0 1094.6,262.0 1101.0,275.0" fill="none" stroke="#fcd6a4" stroke-width="9.5" stroke-linejoin="round"/>
<polyline points="1195.0,60.0 1180.0,92.8 1150.5,144.5 1122.5,191.8 1107.5,234.9 1101.0,275.0" fill="none" stroke="#e2b57c" stroke-width="10.7" stroke-linejoin="round"/>
<polyline points="1195.0,60.0 1180.0,92.8 1150.5,144.5 1122.5,191.8 1107.5,234.9 1101.0,275.0" fill="none" stroke="#fcd6a4" stroke-width="9.5" stroke-linejoin="round"/>
<polyline points="906.0,140.2 953.3,118.6 951.0,101.4 964.0,75.6 958.0,67.0" fill="none" stroke="#6b6bef" stroke-width="1.1" stroke-dasharray="2,1.6"/>
<polyline points="968.3,222.0 1022.0,198.3" fill="none" stroke="#6b6bef" stroke-width="1.1" stroke-dasharray="2,1.6"/>
<polyline points="964.0,67.0 974.8,99.3 985.5,131.6 1000.0,162.0 1022.0,198.3" fill="none" stroke="#6b6bef" stroke-width="1.1" stroke-dasharray="2,1.6"/>
<polyline points="1242.0,67.0 1232.0,90.0 1228.0,105.0 1236.0,118.0 1260.0,128.0" fill="none" stroke="#6b6bef" stroke-width="1.1" stroke-dasharray="2,1.6"/>
<polyline points="1170.0,272.0 1185.0,240.0" fill="none" stroke="#6b6bef" stroke-width="1.1" stroke-dasharray="2,1.6"/>
<text x="1004.0" y="90.0" font-size="7.2" fill="#555"  transform="rotate(-35 1004.0 90.0)">Waisenhofstraße</text>
<text x="1022.0" y="126.0" font-size="7.2" fill="#555"  transform="rotate(20 1022.0 126.0)">Klappenstraße</text>
<text x="1052.0" y="93.0" font-size="7.2" fill="#555"  transform="rotate(43 1052.0 93.0)">Wickedestraße</text>
<text x="1097.0" y="140.0" font-size="7.2" fill="#555"  transform="rotate(43 1097.0 140.0)">Wickedestraße</text>
<text x="1068.0" y="172.0" font-size="7.2" fill="#555"  transform="rotate(-52 1068.0 172.0)">Adlerstraße</text>
<text x="1110.0" y="100.0" font-size="7.2" fill="#555"  transform="rotate(32 1110.0 100.0)">Reiferstraße</text>
<text x="1102.0" y="114.0" font-size="7.2" fill="#555"  transform="rotate(40 1102.0 114.0)">Glockenstraße</text>
<text x="1058.0" y="69.0" font-size="7.2" fill="#555"  transform="rotate(33 1058.0 69.0)">Reiferstraße</text>
<text x="1146.0" y="70.0" font-size="7.2" fill="#555"  transform="rotate(30 1146.0 70.0)">Feuerdesstraße</text>
<text x="1188.4" y="157.2" font-size="9.4" fill="#333"  transform="rotate(0 1188.4 157.2)" textLength="63.6" lengthAdjust="spacingAndGlyphs">Marienbrücke</text>
<text x="1240.0" y="131.0" font-size="9.2" fill="#8a72a8"  transform="rotate(-28 1240.0 131.0)" textLength="84" lengthAdjust="spacingAndGlyphs">Sankt Lorenz Nord</text>
<text x="1362.0" y="119.0" font-size="10" fill="#5a7ea8"  transform="rotate(-18 1362.0 119.0)" textLength="48" lengthAdjust="spacingAndGlyphs">Stadttrave</text>
<text x="1408.0" y="79.0" font-size="7.8" fill="#5a7ea8" font-style="italic" transform="rotate(-3 1408.0 79.0)" textLength="40" lengthAdjust="spacingAndGlyphs">Hansahafen</text>
<text x="1392.0" y="117.0" font-size="8" fill="#8a72a8" font-style="italic" transform="rotate(0 1392.0 117.0)" textLength="38" lengthAdjust="spacingAndGlyphs">Hansefahrt</text>
<text x="1287.0" y="249.0" font-size="7.8" fill="#333"  transform="rotate(0 1287.0 249.0)" textLength="44" lengthAdjust="spacingAndGlyphs">Beckergrube</text>
<text x="1232.0" y="259.0" font-size="7.8" fill="#5a7ea8" font-style="italic" transform="rotate(0 1232.0 259.0)" textLength="44" lengthAdjust="spacingAndGlyphs">Holstenhafen</text>
<text x="1380.0" y="213.0" font-size="7.2" fill="#444"  transform="rotate(12 1380.0 213.0)">Fischergrube</text>
<text x="1396.0" y="176.0" font-size="7.2" fill="#444"  transform="rotate(20 1396.0 176.0)">Engelsgrube</text>
<text x="1370.0" y="139.0" font-size="7.2" fill="#444"  transform="rotate(30 1370.0 139.0)">Alsheide</text>
<text x="1434.0" y="247.0" font-size="7.2" fill="#444"  transform="rotate(-72 1434.0 247.0)">Breite Straße</text>
<text x="1332.0" y="244.0" font-size="7.2" fill="#444"  transform="rotate(-84 1332.0 244.0)">Ellerbrook</text>
<text x="1337.0" y="200.0" font-size="7.2" fill="#444"  transform="rotate(-66 1337.0 200.0)">Große Kiesau</text>
<text x="1401.0" y="155.0" font-size="7.2" fill="#444"  transform="rotate(-60 1401.0 155.0)">Engelswisch</text>
<text x="1408.0" y="271.0" font-size="10.5" fill="#7a7a7a"  transform="rotate(0 1408.0 271.0)" textLength="58" lengthAdjust="spacingAndGlyphs">Innenstadt</text>
<text x="1164.0" y="132.0" font-size="7" fill="#444"  transform="rotate(-62 1164.0 132.0)">Katharinenstraße</text>
<text x="1102.0" y="220.0" font-size="7" fill="#444"  transform="rotate(-58 1102.0 220.0)">Katharinenstraße</text>
<text x="1146.0" y="239.0" font-size="8" fill="#8a8a8a"  transform="rotate(-60 1146.0 239.0)">Vogelfluglinie</text>
<text x="1250.0" y="187.0" font-size="7.5" fill="#333"  transform="rotate(-52 1250.0 187.0)">Lastadie</text>
<text x="1173.0" y="270.0" font-size="9" fill="#5a7ea8" font-style="italic" transform="rotate(-58 1173.0 270.0)">Stadtgraben</text>
<text x="893.0" y="219.0" font-size="7.2" fill="#444"  transform="rotate(68 893.0 219.0)">traße</text>
<rect x="1178.5" y="70" width="31.5" height="13.5" rx="2" fill="#f9e5c4" stroke="#dcc6a0" stroke-width="0.8"/>
<text x="1183" y="80.6" font-size="9" fill="#444">L 309</text>
<rect x="925.3" y="232.7" width="29" height="14" rx="2" fill="#f5f7d3" stroke="#cbce9c" stroke-width="0.8"/>
<text x="929.8" y="243.4" font-size="9" fill="#333">K 14</text>
<text x="1239" y="214" font-size="13.5" font-weight="bold" fill="#1d93d8">P</text>
<text x="1194" y="270" font-size="13.5" font-weight="bold" fill="#1d93d8">P</text>
<g fill="none" stroke="#9966cc" stroke-width="1.3"><circle cx="1249" cy="222" r="1.3"/><path d="M1249,223.3 V232 M1246,225.5 H1252 M1244,228 Q1244.5,232 1249,232 Q1253.5,232 1254,228"/></g>
<g fill="none" stroke="#9966cc" stroke-width="1.3"><circle cx="1413.6" cy="96.5" r="1.3"/><path d="M1413.6,97.8 V106.5 M1410.6,100.0 H1416.6 M1408.6,102.5 Q1409.1,106.5 1413.6,106.5 Q1418.1,106.5 1418.6,102.5"/></g>
<path d="M998.55,213.75 A9.45,9.45 0 1 1 1017.45,213.75 C1017.45,218.75 1010.5,223.0 1008.0,232.0 C1005.5,223.0 998.55,218.75 998.55,213.75 Z" fill="#0b2c4e"/>
<path d="M1000.6,213.70000000000002 L1008.0,206.5 L1015.4,213.70000000000002 M1003.6,211.3 V218.5 M1012.3,211.3 V218.5 M1007.6,211.9 V218.5 M1007.6,217.5 H1013.2" fill="none" stroke="#fff" stroke-width="2" stroke-linejoin="miter"/>
<path d="M1218.05,241.45 A9.45,9.45 0 1 1 1236.95,241.45 C1236.95,246.45 1230.0,252.3 1227.5,261.3 C1225.0,252.3 1218.05,246.45 1218.05,241.45 Z" fill="#0b2c4e"/>
<path d="M1220.1,241.4 L1227.5,234.2 L1234.9,241.4 M1223.1,239 V246.2 M1231.8,239 V246.2 M1227.1,239.6 V246.2 M1227.1,245.2 H1232.7" fill="none" stroke="#fff" stroke-width="2" stroke-linejoin="miter"/>
<path d="M1342.1499999999999,86.15 A9.45,9.45 0 1 1 1361.05,86.15 C1361.05,91.15 1354.1,96.7 1351.6,105.7 C1349.1,96.7 1342.1499999999999,91.15 1342.1499999999999,86.15 Z" fill="#0b2c4e"/>
<path d="M1344.1999999999998,86.10000000000001 L1351.6,78.9 L1359.0,86.10000000000001 M1347.1999999999998,83.7 V90.9 M1355.8999999999999,83.7 V90.9 M1351.1999999999998,84.3 V90.9 M1351.1999999999998,89.9 H1356.8" fill="none" stroke="#fff" stroke-width="2" stroke-linejoin="miter"/>
</g>
</svg>
</body></html>
